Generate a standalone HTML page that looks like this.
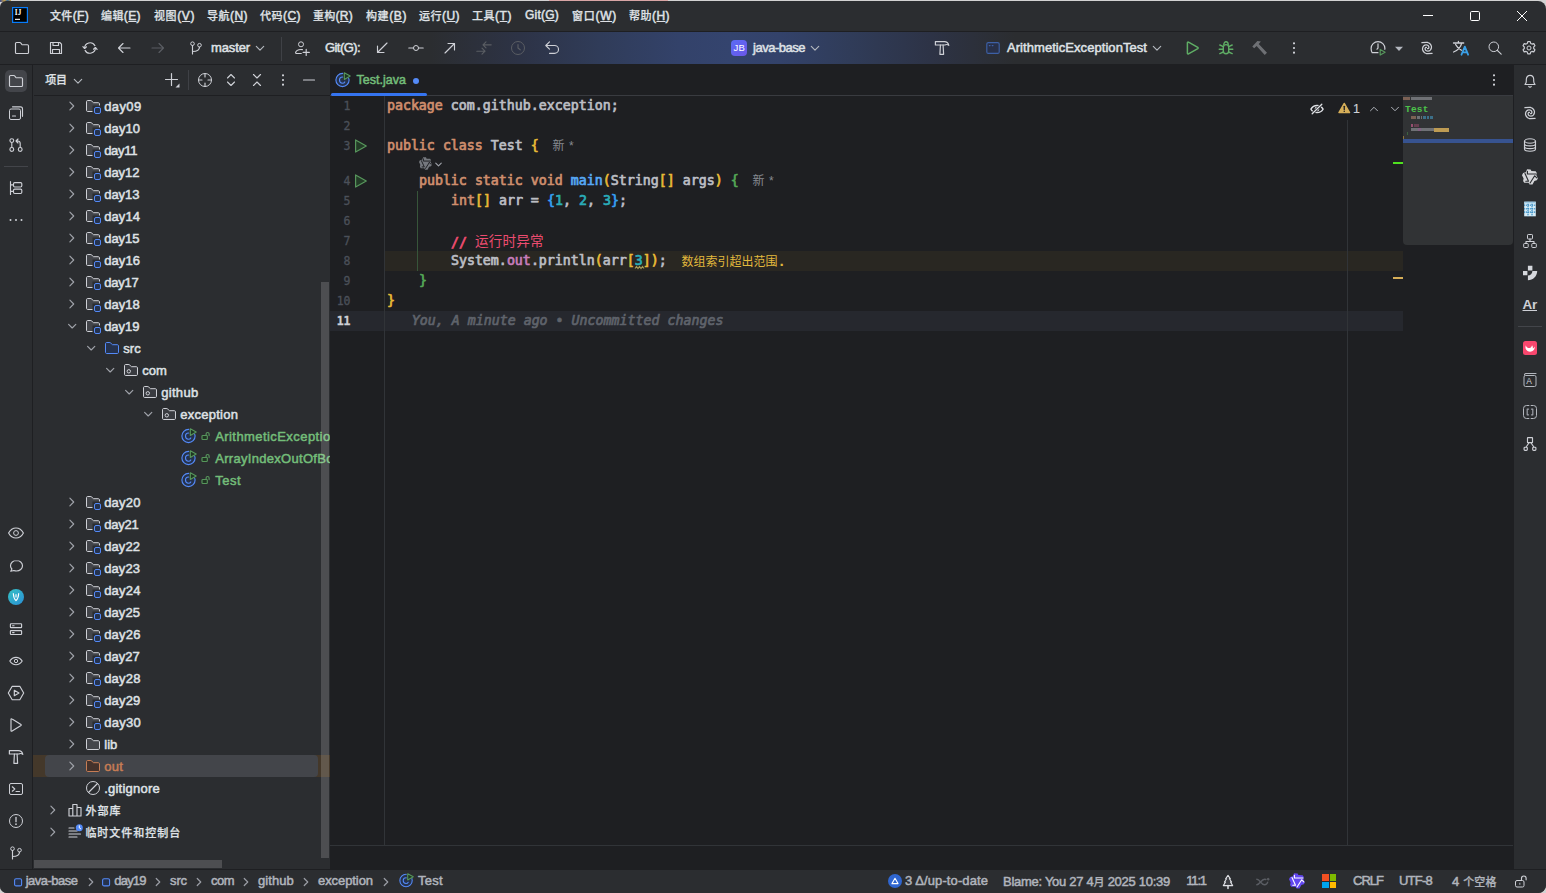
<!DOCTYPE html>
<html lang="zh-CN">
<head>
<meta charset="utf-8">
<title>java-base – Test.java</title>
<style>
html,body{margin:0;padding:0;background:#D2D2D2;}
body{width:1546px;height:893px;overflow:hidden;font-family:"Liberation Sans","Noto Sans CJK SC",sans-serif;font-size:12px;color:#DFE1E5;}
#app{position:absolute;left:0;top:1px;width:1546px;height:892px;overflow:hidden;background:#2B2D30;border-radius:6px 8px 8px 7px;}
#win{position:absolute;left:0;top:-1px;width:1546px;height:893px;}
#app *{box-sizing:border-box;}
.a{position:absolute;}
.i{position:absolute;overflow:visible;}
.t{position:absolute;white-space:nowrap;line-height:20px;height:20px;font-size:13px;-webkit-text-stroke:0.5px currentColor;}
.z{font-family:"Noto Sans CJK SC",sans-serif;font-size:11px;font-weight:500;-webkit-text-stroke:0.25px currentColor;}
.hl{position:absolute;background:#1E1F22;height:1px;}
.vl{position:absolute;background:#1E1F22;width:1px;}
u{text-decoration:underline;text-underline-offset:0.5px;text-decoration-thickness:1px;}
/* toolbar */
#toolbar{position:absolute;left:0;top:32px;width:1546px;height:32px;background:linear-gradient(90deg,#2B2D30 0,#2B2D30 430px,#2D3346 520px,#303c59 600px,#33426a 680px,#34446e 730px,#33426a 780px,#303c59 850px,#2D3346 930px,#2B2D30 1015px,#2B2D30 100%);}
/* project */
#proj{position:absolute;left:34px;top:65px;width:296px;height:804px;background:#2B2D30;overflow:hidden;}
/* editor */
#editor{position:absolute;left:330px;top:65px;width:1183px;height:804px;background:#1E1F22;overflow:hidden;}
.code{position:absolute;white-space:pre;font-family:"DejaVu Sans Mono","Liberation Mono","Noto Sans CJK SC",monospace;font-size:13.29px;line-height:20px;height:20px;color:#BCBEC4;}
.ln{position:absolute;text-align:right;font-family:"DejaVu Sans Mono","Liberation Mono",monospace;font-size:11.5px;line-height:20px;height:20px;color:#4B5059;}
.k{color:#CF8E6D;}
.n{color:#2AACB8;}
.m{color:#56A8F5;}
.f{color:#C77DBB;}
.c{color:#EC4C70;}
.b1{color:#E8BA36;}
.b2{color:#54A857;}
.b3{color:#359FF4;}
.code{-webkit-text-stroke:0.7px currentColor;}
.hint{letter-spacing:0.6px;color:#868A91;-webkit-text-stroke:0;font-family:"Liberation Sans","Noto Sans CJK SC",sans-serif;}
.blame{color:#5F636B;font-style:italic;}
.zc{position:relative;top:-0.6px;font-family:"Noto Sans CJK SC",sans-serif;font-size:13.6px;letter-spacing:0.2px;font-weight:400;-webkit-text-stroke:0;}
.warnhint .z{font-weight:400;-webkit-text-stroke:0;font-size:12px;}
.ln{-webkit-text-stroke:0.3px currentColor;}
.edge{position:absolute;}
.dot{font-family:"DejaVu Sans Mono","Liberation Mono",monospace;font-weight:bold;font-size:13px;}

</style>
</head>
<body>
<div class="edge" style="left:549px;top:0;width:119px;height:1px;background:#D9A5A5"></div>
<div class="edge" style="left:0;top:0;width:11px;height:2px;background:linear-gradient(90deg,#3A4A8A,#C9A24A 40%,#3A6A9A 70%,#C9A24A)"></div>
<div id="app">
<div id="win">
<!-- ===== title / menu bar ===== -->
<svg class="i" style="left:12px;top:7px" width="16" height="16" viewBox="0 0 16 16">
<rect x="0.6" y="0.6" width="14.8" height="14.8" fill="#000" stroke="#087CFA" stroke-width="1.2"/>
<text x="2.7" y="8.1" font-family="Liberation Serif, serif" font-weight="bold" font-size="7.2" fill="#fff" letter-spacing="0.2">IJ</text>
<rect x="3" y="11.8" width="5" height="1.1" fill="#fff"/></svg>
<span class="t " style="left:50px;top:5.3px;font-size:12px;letter-spacing:0.331px;"><span class="z">文件</span>(<u>F</u>)</span>
<span class="t " style="left:101px;top:5.3px;font-size:12px;letter-spacing:0.397px;"><span class="z">编辑</span>(<u>E</u>)</span>
<span class="t " style="left:154px;top:5.3px;font-size:12px;letter-spacing:0.597px;"><span class="z">视图</span>(<u>V</u>)</span>
<span class="t " style="left:207px;top:5.3px;font-size:12px;letter-spacing:0.466px;"><span class="z">导航</span>(<u>N</u>)</span>
<span class="t " style="left:260px;top:5.3px;font-size:12px;letter-spacing:0.466px;"><span class="z">代码</span>(<u>C</u>)</span>
<span class="t " style="left:313px;top:5.3px;font-size:12px;letter-spacing:0.266px;"><span class="z">重构</span>(<u>R</u>)</span>
<span class="t " style="left:366px;top:5.3px;font-size:12px;letter-spacing:0.597px;"><span class="z">构建</span>(<u>B</u>)</span>
<span class="t " style="left:419px;top:5.3px;font-size:12px;letter-spacing:0.466px;"><span class="z">运行</span>(<u>U</u>)</span>
<span class="t " style="left:472px;top:5.3px;font-size:12px;letter-spacing:0.531px;"><span class="z">工具</span>(<u>T</u>)</span>
<span class="t " style="left:525px;top:5.3px;font-size:12px;letter-spacing:0.219px;">Git(<u>G</u>)</span>
<span class="t " style="left:572px;top:5.3px;font-size:12px;letter-spacing:0.734px;"><span class="z">窗口</span>(<u>W</u>)</span>
<span class="t " style="left:629px;top:5.3px;font-size:12px;letter-spacing:0.466px;"><span class="z">帮助</span>(<u>H</u>)</span>
<svg class="i" style="left:1420px;top:8px" width="16" height="16" viewBox="0 0 16 16" ><path d="M3 7.5h10" stroke="#fff" stroke-width="1" fill="none"/></svg>
<svg class="i" style="left:1467px;top:8px" width="16" height="16" viewBox="0 0 16 16" ><rect x="3.5" y="3.5" width="9" height="9" rx="1.2" stroke="#fff" stroke-width="1" fill="none"/></svg>
<svg class="i" style="left:1514px;top:8px" width="16" height="16" viewBox="0 0 16 16" ><path d="M3 3l10 10M13 3L3 13" stroke="#fff" stroke-width="1" fill="none"/></svg>
<div class="hl" style="left:0;top:31px;width:1546px"></div>
<!-- ===== main toolbar ===== -->
<div id="toolbar"></div>
<svg class="i" style="left:14px;top:40px" width="16" height="16" viewBox="0 0 16 16" ><path d="M1.5 3.6c0-.6.5-1.1 1.1-1.1h3.3c.3 0 .6.1.8.4l1.1 1.4c.2.2.5.4.8.4h4.8c.6 0 1.1.5 1.1 1.1v6.6c0 .6-.5 1.1-1.1 1.1H2.6c-.6 0-1.1-.5-1.1-1.1z" stroke="#CED0D6" stroke-width="1.15" fill="none" stroke-linecap="round" stroke-linejoin="round" /></svg>
<svg class="i" style="left:48px;top:40px" width="16" height="16" viewBox="0 0 16 16" ><path d="M2.5 2.5h9.3l1.7 1.7v9.3h-11zM5 2.5v3h5.5v-3M4.5 13.5v-4h7v4" stroke="#CED0D6" stroke-width="1.15" fill="none" stroke-linecap="round" stroke-linejoin="round" /></svg>
<svg class="i" style="left:82px;top:40px" width="16" height="16" viewBox="0 0 16 16" ><path d="M2.6 8.3A5.5 5.5 0 0 1 12.9 5.6M13.4 7.7A5.5 5.5 0 0 1 3.1 10.4" stroke="#CED0D6" stroke-width="1.15" fill="none" stroke-linecap="round" stroke-linejoin="round" /><path d="M.9 6.6l1.7 1.9 1.9-1.7M15.1 9.4l-1.7-1.9-1.9 1.7" stroke="#CED0D6" stroke-width="1.15" fill="none" stroke-linecap="round" stroke-linejoin="round" /></svg>
<svg class="i" style="left:116px;top:40px" width="16" height="16" viewBox="0 0 16 16" ><path d="M14 8H2.5M7 3.5L2.5 8 7 12.5" stroke="#CED0D6" stroke-width="1.15" fill="none" stroke-linecap="round" stroke-linejoin="round" /></svg>
<svg class="i" style="left:150px;top:40px" width="16" height="16" viewBox="0 0 16 16" ><path d="M2 8h11.5M9 3.5L13.5 8 9 12.5" stroke="#5A5D63" stroke-width="1.15" fill="none" stroke-linecap="round" stroke-linejoin="round" /></svg>
<svg class="i" style="left:188px;top:40px" width="16" height="16" viewBox="0 0 16 16" ><path d="M4.5 5.5v8.5M4.5 11.5c4 0 7-1 7-4.5" stroke="#CED0D6" stroke-width="1.15" fill="none" stroke-linecap="round" stroke-linejoin="round" /><circle cx="4.5" cy="3.7" r="1.8" stroke="#CED0D6" fill="none"/><circle cx="11.5" cy="5.2" r="1.8" stroke="#CED0D6" fill="none"/></svg>
<svg class="i" style="left:252px;top:40px" width="16" height="16" viewBox="0 0 16 16" ><path d="M4.3 6.4l3.7 3.7 3.7-3.7" stroke="#B4B8BF" stroke-width="1.15" fill="none" stroke-linecap="round" stroke-linejoin="round" /></svg>
<svg class="i" style="left:294px;top:40px" width="16" height="16" viewBox="0 0 16 16" ><circle cx="7" cy="4.3" r="2.5" stroke="#CED0D6" fill="none"/><path d="M7.3 13.5H2.3c-.5 0-.8-.4-.7-.9.5-2 2.4-3.1 5.4-3.1.6 0 1 0 1.4.1M12.2 9.3v6.2M9.1 12.4h6.2" stroke="#CED0D6" stroke-width="1.15" fill="none" stroke-linecap="round" stroke-linejoin="round" /></svg>
<svg class="i" style="left:374px;top:40px" width="16" height="16" viewBox="0 0 16 16" ><path d="M13 3L3.5 12.5M3.5 6v6.5H10" stroke="#CED0D6" stroke-width="1.15" fill="none" stroke-linecap="round" stroke-linejoin="round" /></svg>
<svg class="i" style="left:408px;top:40px" width="16" height="16" viewBox="0 0 16 16" ><circle cx="8" cy="8" r="2.500" stroke="#CED0D6" fill="none"/><path d="M.8 8h4.7M10.5 8h4.7" stroke="#CED0D6" stroke-width="1.15" fill="none" stroke-linecap="round" stroke-linejoin="round" /></svg>
<svg class="i" style="left:442px;top:40px" width="16" height="16" viewBox="0 0 16 16" ><path d="M3 13L12.5 3.5M6 3.5h6.5V10" stroke="#CED0D6" stroke-width="1.15" fill="none" stroke-linecap="round" stroke-linejoin="round" /></svg>
<svg class="i" style="left:476px;top:40px" width="16" height="16" viewBox="0 0 16 16" ><path d="M15.2 4.8H7M10 1.8L7 4.8l3 3M.8 11.2H9M6 8.2l3 3-3 3" stroke="#5A5D63" stroke-width="1.15" fill="none" stroke-linecap="round" stroke-linejoin="round" /></svg>
<svg class="i" style="left:510px;top:40px" width="16" height="16" viewBox="0 0 16 16" ><circle cx="8" cy="8" r="6.500" stroke="#5A5D63" fill="none"/><path d="M8 4.5V8l2.2 1.8" stroke="#5A5D63" stroke-width="1.15" fill="none" stroke-linecap="round" stroke-linejoin="round" /></svg>
<svg class="i" style="left:544px;top:40px" width="16" height="16" viewBox="0 0 16 16" ><path d="M5.5 1.8L1.8 5.5l3.7 3.7M2 5.5h8.5c2.2 0 4 1.7 4 3.9s-1.8 3.9-4 3.9H5.5" stroke="#CED0D6" stroke-width="1.15" fill="none" stroke-linecap="round" stroke-linejoin="round" /></svg>
<svg class="i" style="left:807px;top:40px" width="16" height="16" viewBox="0 0 16 16" ><path d="M4.3 6.4l3.7 3.7 3.7-3.7" stroke="#B4B8BF" stroke-width="1.15" fill="none" stroke-linecap="round" stroke-linejoin="round" /></svg>
<svg class="i" style="left:934px;top:40px" width="16" height="16" viewBox="0 0 16 16" ><path d="M1.4 1.6h9c2.1 0 3.8 1.3 4.4 3.7-1-.8-2.1-1-3.2-.6l-.8.3H1.4z" stroke="#CED0D6" stroke-width="1.2" fill="none" stroke-linecap="round" stroke-linejoin="round" /><path d="M6.4 5.2L5.9 14.3h3.7L9.1 5.2" stroke="#CED0D6" stroke-width="1.2" fill="none" stroke-linecap="round" stroke-linejoin="round" /></svg>
<svg class="i" style="left:985px;top:40px" width="16" height="16" viewBox="0 0 16 16" ><rect x="1.800" y="2.600" width="12.400" height="10.800" rx="1.500" stroke="#3D60A6" stroke-width="1.15" fill="#283048"/><path d="M4.3 5.6h.8M7.2 5.6h.8" stroke="#3D60A6" stroke-width="1.1" fill="none" stroke-linecap="round" stroke-linejoin="round" /></svg>
<svg class="i" style="left:1149px;top:40px" width="16" height="16" viewBox="0 0 16 16" ><path d="M4.3 6.4l3.7 3.7 3.7-3.7" stroke="#B4B8BF" stroke-width="1.15" fill="none" stroke-linecap="round" stroke-linejoin="round" /></svg>
<svg class="i" style="left:1184.5px;top:40px" width="16" height="16" viewBox="0 0 16 16" ><path d="M2.4 2.7v10.6c0 .6.6.9 1.1.6l9.3-5.3c.4-.3.4-.9 0-1.2L3.5 2.1c-.5-.3-1.1 0-1.1.6z" stroke="#5FAD65" stroke-width="1.5" fill="none" stroke-linecap="round" stroke-linejoin="round" /></svg>
<svg class="i" style="left:1218px;top:40px" width="16" height="16" viewBox="0 0 16 16" ><path d="M5.3 7.3c0-1.5 1.2-2.7 2.7-2.7s2.7 1.2 2.7 2.7v3.7c0 1.5-1.2 2.7-2.7 2.7s-2.7-1.2-2.7-2.7z" stroke="#5FAD65" stroke-width="1.4" fill="none" stroke-linecap="round" stroke-linejoin="round" /><path d="M5.8 4.8C5.8 3 6.8 1.8 8 1.8s2.2 1.2 2.2 3M1.2 9.2h4M10.8 9.2h4M1.8 5l3.5 1.6M14.2 5l-3.5 1.6M1.8 13.6l3.5-1.6M14.2 13.6l-3.5-1.6" stroke="#5FAD65" stroke-width="1.4" fill="none" stroke-linecap="round" stroke-linejoin="round" /></svg>
<svg class="i" style="left:1252px;top:40px" width="16" height="16" viewBox="0 0 16 16" ><path d="M.3 6.5L5.4 1l3.5.5-2.2 2.4 8.3 8.8-2.3 2.2-8.1-8.9-2.4 2.2z" fill="#6E7074" /></svg>
<svg class="i" style="left:1286px;top:40px" width="16" height="16" viewBox="0 0 16 16" ><path d="M8 2.2a1.1 1.1 0 1 0 0 2.2 1.1 1.1 0 0 0 0-2.2zM8 6.9a1.1 1.1 0 1 0 0 2.2 1.1 1.1 0 0 0 0-2.2zM8 11.6a1.1 1.1 0 1 0 0 2.2 1.1 1.1 0 0 0 0-2.2z" fill="#CED0D6" /></svg>
<svg class="i" style="left:1370px;top:40px" width="16" height="16" viewBox="0 0 16 16" ><path d="M8 12.7H2.2C1.5 11.5 1.1 10 1.1 8.5a6.9 6.9 0 0 1 13.8 0c0 .3 0 .5-.1.8M8 3.8v4.3l-1 1.1" stroke="#CED0D6" stroke-width="1.2" fill="none" stroke-linecap="round" stroke-linejoin="round" /><path d="M9 8v8.5l7.3-4.2z" fill="#2B2D30"/><path d="M10.2 9.5v5.6l4.9-2.8z" stroke="#57965C" stroke-width="1.2" fill="none" stroke-linecap="round" stroke-linejoin="round" fill="#1F3522"/></svg>
<svg class="i" style="left:1391px;top:40px" width="16" height="16" viewBox="0 0 16 16" ><path d="M4 6.8h8L8 11z" fill="#B4B8BF" /></svg>
<svg class="i" style="left:1419px;top:40px" width="16" height="16" viewBox="0 0 16 16" ><path d="M2.9 2.7L7.5 2.3L8.3 2.4L9.1 2.7L9.8 3L10.5 3.4L11.1 3.9L11.6 4.5L11.9 5.1L12.2 5.7L12.4 6.4L12.5 7L12.4 7.7L12.3 8.3L12.1 8.9L11.8 9.4L11.5 9.9L11.1 10.3L10.6 10.6L10.1 10.8L9.6 11L9.1 11.1L8.7 11.1L8.2 11L7.8 10.9L7.4 10.7L7 10.5L6.7 10.2L6.5 9.9L6.3 9.6L6.2 9.3L6.1 9L6.1 8.6L6.2 8.4L6.2 8.1L6.4 7.8L6.5 7.6L6.7 7.5L6.9 7.4L7.1 7.3L7.3 7.3L7.5 7.3M13.1 13.3L8.5 13.7L7.7 13.6L6.9 13.3L6.2 13L5.5 12.6L4.9 12.1L4.4 11.5L4.1 10.9L3.8 10.3L3.6 9.6L3.5 9L3.6 8.3L3.7 7.7L3.9 7.1L4.2 6.6L4.5 6.1L4.9 5.7L5.4 5.4L5.9 5.2L6.4 5L6.9 4.9L7.3 4.9L7.8 5L8.2 5.1L8.6 5.3L9 5.5L9.3 5.8L9.5 6.1L9.7 6.4L9.8 6.7L9.9 7L9.9 7.4L9.8 7.6L9.8 7.9L9.6 8.2L9.5 8.4L9.3 8.5L9.1 8.6L8.9 8.7L8.7 8.7L8.5 8.7" stroke="#CED0D6" stroke-width="1.25" fill="none" stroke-linecap="round" stroke-linejoin="round" /></svg>
<svg class="i" style="left:1453px;top:40px" width="16" height="16" viewBox="0 0 16 16" ><path d="M.5 3h10.2M5.4 1.5V3M8.7 3.2C7.8 7 4.8 10.4.6 12M2.6 4.5c1.2 2.4 3.2 4.4 5.8 5.8" stroke="#CED0D6" stroke-width="1.3" fill="none" stroke-linecap="round" stroke-linejoin="round" /><path d="M8.5 14.7l3.3-8 3.3 8M9.5 12.3h4.6" stroke="#3AA0E8" stroke-width="1.8" fill="none" stroke-linecap="round" stroke-linejoin="round" /></svg>
<svg class="i" style="left:1487px;top:40px" width="16" height="16" viewBox="0 0 16 16" ><circle cx="6.800" cy="6.800" r="4.800" stroke="#CED0D6" fill="none"/><path d="M10.3 10.3L14.2 14.2" stroke="#CED0D6" stroke-width="1.15" fill="none" stroke-linecap="round" stroke-linejoin="round" /></svg>
<svg class="i" style="left:1521px;top:40px" width="16" height="16" viewBox="0 0 16 16" ><path d="M6.8 1.6h2.4l.5 1.8 1.3.7 1.8-.5 1.2 2.1-1.3 1.3v1.5l1.3 1.3-1.2 2.1-1.8-.5-1.3.7-.5 1.8H6.8l-.5-1.8-1.3-.7-1.8.5-1.2-2.1 1.3-1.3V7l-1.3-1.3 1.2-2.1 1.8.5 1.3-.7z" stroke="#CED0D6" stroke-width="1.15" fill="none" stroke-linecap="round" stroke-linejoin="round" /><circle cx="8" cy="8" r="2" stroke="#CED0D6" fill="none"/></svg>
<span class="t " style="left:211px;top:38.2px;letter-spacing:-0.122px;">master</span>
<div class="a" style="left:281px;top:37px;width:1px;height:24px;background:#3F4146"></div>
<span class="t " style="left:325px;top:38.2px;letter-spacing:-0.571px;">Git(G):</span>
<div class="a" style="left:731px;top:40px;width:16px;height:16px;border-radius:4px;background:linear-gradient(135deg,#5A6BF5,#6B57E8);"></div>
<span class="t " style="left:733.6px;top:38.2px;font-size:9.5px;color:#fff;-webkit-text-stroke:0;letter-spacing:0.153px;">JB</span>
<span class="t " style="left:753px;top:38.2px;letter-spacing:-0.486px;">java-base</span>
<span class="t " style="left:1007px;top:38.2px;letter-spacing:0.055px;">ArithmeticExceptionTest</span>
<div class="hl" style="left:0;top:64px;width:1546px"></div>
<!-- ===== left tool window stripe ===== -->
<div class="vl" style="left:32px;top:65px;height:804px"></div>
<div class="a" style="left:5px;top:70px;width:22px;height:22px;border-radius:5px;background:#43454A"></div>
<svg class="i" style="left:8px;top:73px" width="16" height="16" viewBox="0 0 16 16" ><path d="M1.5 3.6c0-.6.5-1.1 1.1-1.1h3.3c.3 0 .6.1.8.4l1.1 1.4c.2.2.5.4.8.4h4.8c.6 0 1.1.5 1.1 1.1v6.6c0 .6-.5 1.1-1.1 1.1H2.6c-.6 0-1.1-.5-1.1-1.1z" stroke="#CED0D6" stroke-width="1.15" fill="none" stroke-linecap="round" stroke-linejoin="round" /></svg>
<svg class="i" style="left:8px;top:105px" width="16" height="16" viewBox="0 0 16 16" ><rect x="1.5" y="4" width="11" height="10.5" rx="1.5" stroke="#CED0D6" stroke-width="1" fill="none"/><path d="M4.5 1.8h8c1.1 0 2 .9 2 2v7.5" stroke="#CED0D6" stroke-width="1.15" fill="none" stroke-linecap="round" stroke-linejoin="round" /><path d="M4.5 11h3" stroke="#CED0D6" stroke-width="1.15" fill="none" stroke-linecap="round" stroke-linejoin="round" /></svg>
<svg class="i" style="left:8px;top:137px" width="16" height="16" viewBox="0 0 16 16" ><circle cx="3.8" cy="3.6" r="1.9" stroke="#CED0D6" stroke-width="1.15" fill="none"/><circle cx="3.8" cy="12.4" r="1.9" stroke="#CED0D6" stroke-width="1.15" fill="none"/><circle cx="12.2" cy="12.4" r="1.9" stroke="#CED0D6" stroke-width="1.15" fill="none"/><path d="M3.8 5.5v5M12.2 10.5V6.5c0-1.5-1-2.5-2.5-2.5H8.2M10 2L8 4l2 2" stroke="#CED0D6" stroke-width="1.15" fill="none" stroke-linecap="round" stroke-linejoin="round" /></svg>
<svg class="i" style="left:8px;top:180px" width="16" height="16" viewBox="0 0 16 16" ><path d="M2.5 1.5v13M2.5 4.8h3M2.5 11.3h3" stroke="#CED0D6" stroke-width="1.15" fill="none" stroke-linecap="round" stroke-linejoin="round" /><rect x="5.5" y="2.6" width="8.3" height="4.4" rx="1.2" stroke="#CED0D6" stroke-width="1.15" fill="none"/><rect x="5.5" y="9.1" width="8.3" height="4.4" rx="1.2" stroke="#CED0D6" stroke-width="1.15" fill="none"/></svg>
<svg class="i" style="left:8px;top:211.5px" width="16" height="16" viewBox="0 0 16 16" ><path d="M2.5 7a1 1 0 1 0 0 2 1 1 0 0 0 0-2zM8 7a1 1 0 1 0 0 2 1 1 0 0 0 0-2zM13.5 7a1 1 0 1 0 0 2 1 1 0 0 0 0-2z" fill="#CED0D6" /></svg>
<svg class="i" style="left:8px;top:525px" width="16" height="16" viewBox="0 0 16 16" ><path d="M.6 8C2.2 5 4.8 3 8 3s5.8 2 7.4 5c-1.6 3-4.2 5-7.4 5S2.2 11 .6 8z" stroke="#CED0D6" stroke-width="1.15" fill="none" stroke-linecap="round" stroke-linejoin="round" /><circle cx="8" cy="8" r="2.4" stroke="#CED0D6" stroke-width="1" fill="none"/></svg>
<svg class="i" style="left:8px;top:557.5px" width="16" height="16" viewBox="0 0 16 16" ><path d="M8.5 2.5c-3.3 0-6 2.3-6 5.2 0 1.3.5 2.4 1.4 3.3L2.8 13.3l3-.8c.8.3 1.7.5 2.7.5 3.3 0 6-2.3 6-5.3s-2.7-5.2-6-5.2z" stroke="#CED0D6" stroke-width="1.15" fill="none" stroke-linecap="round" stroke-linejoin="round" /></svg>
<svg class="i" style="left:8px;top:621px" width="16" height="16" viewBox="0 0 16 16" ><rect x="2.4" y="2.7" width="11.2" height="3.9" rx="0.7" stroke="#CED0D6" stroke-width="1.15" fill="none"/><rect x="2.4" y="9.6" width="11.2" height="3.9" rx="0.7" stroke="#CED0D6" stroke-width="1.15" fill="none"/><path d="M4.6 4.7h1.5M4.6 11.6h1.5" stroke="#CED0D6" stroke-width="1.1" fill="none" stroke-linecap="round" stroke-linejoin="round" /></svg>
<svg class="i" style="left:8px;top:653px" width="16" height="16" viewBox="0 0 16 16" ><path d="M1.8 8C3.2 5.8 5.4 4.3 8 4.3s4.8 1.5 6.2 3.7c-1.4 2.2-3.6 3.7-6.2 3.7S3.2 10.2 1.8 8z" stroke="#CED0D6" stroke-width="1.15" fill="none" stroke-linecap="round" stroke-linejoin="round" /><circle cx="8" cy="8" r="1.7" stroke="#CED0D6" stroke-width="1" fill="none"/></svg>
<svg class="i" style="left:8px;top:685px" width="16" height="16" viewBox="0 0 16 16" ><path d="M4.2 1.3h7.6L15.7 8l-3.9 6.7H4.2L.3 8z" stroke="#CED0D6" stroke-width="1.15" fill="none" stroke-linecap="round" stroke-linejoin="round" /><path d="M6.3 5.3v5.4L11 8z" stroke="#CED0D6" stroke-width="1.15" fill="none" stroke-linecap="round" stroke-linejoin="round" /></svg>
<svg class="i" style="left:8px;top:717px" width="16" height="16" viewBox="0 0 16 16" ><path d="M3 2.2v11.6c0 .4.4.6.7.4l9.3-5.8c.3-.2.3-.6 0-.8L3.7 1.8c-.3-.2-.7 0-.7.4z" stroke="#CED0D6" stroke-width="1.15" fill="none" stroke-linecap="round" stroke-linejoin="round" /></svg>
<svg class="i" style="left:8px;top:749px" width="16" height="16" viewBox="0 0 16 16" ><path d="M1.4 1.6h9c2.1 0 3.8 1.3 4.4 3.7-1-.8-2.1-1-3.2-.6l-.8.3H1.4z" stroke="#CED0D6" stroke-width="1.2" fill="none" stroke-linecap="round" stroke-linejoin="round" /><path d="M6.4 5.2L5.9 14.3h3.7L9.1 5.2" stroke="#CED0D6" stroke-width="1.2" fill="none" stroke-linecap="round" stroke-linejoin="round" /></svg>
<svg class="i" style="left:8px;top:781px" width="16" height="16" viewBox="0 0 16 16" ><rect x="1.5" y="2.5" width="13" height="11" rx="1.5" stroke="#CED0D6" stroke-width="1" fill="none"/><path d="M4.3 5.8L6.8 8l-2.5 2.2M8 10.5h3.5" stroke="#CED0D6" stroke-width="1.15" fill="none" stroke-linecap="round" stroke-linejoin="round" /></svg>
<svg class="i" style="left:8px;top:813px" width="16" height="16" viewBox="0 0 16 16" ><circle cx="8" cy="8" r="6.5" stroke="#CED0D6" stroke-width="1" fill="none"/><path d="M8 4.5v4.2" stroke="#CED0D6" stroke-width="1.3" fill="none" stroke-linecap="round" stroke-linejoin="round" /><path d="M8 10.3a.85.85 0 1 0 0 1.7.85.85 0 0 0 0-1.7z" fill="#CED0D6" /></svg>
<svg class="i" style="left:8px;top:845px" width="16" height="16" viewBox="0 0 16 16" ><path d="M4.5 5.5v8.5M4.5 11.5c4 0 7-1 7-4.5" stroke="#CED0D6" stroke-width="1.15" fill="none" stroke-linecap="round" stroke-linejoin="round" /><circle cx="4.5" cy="3.7" r="1.8" stroke="#CED0D6" fill="none"/><circle cx="11.5" cy="5.2" r="1.8" stroke="#CED0D6" fill="none"/></svg>
<div class="a" style="left:4px;top:166px;width:24px;height:1px;background:#43454A"></div>
<div class="a" style="left:8px;top:589px;width:16px;height:16px;border-radius:8px;background:linear-gradient(135deg,#35C2C4,#2A8FD6)"></div>
<svg class="i" style="left:8px;top:589px" width="16" height="16" viewBox="0 0 16 16" ><path d="M5.3 4.5c.2 3.3 1.2 5.8 2.7 7.2 1.5-1.4 2.5-3.9 2.7-7.2M8 5.5v2.5" stroke="#fff" stroke-width="1.1" fill="none" stroke-linecap="round" stroke-linejoin="round" /></svg>
<!-- ===== right tool window stripe ===== -->
<div class="vl" style="left:1513px;top:65px;height:804px"></div>
<svg class="i" style="left:1522px;top:72.5px" width="16" height="16" viewBox="0 0 16 16" ><path d="M3 11.5c1-.9 1.3-2 1.3-3.5V6.5C4.3 4.1 5.9 2.3 8 2.3s3.7 1.8 3.7 4.2V8c0 1.5.3 2.6 1.3 3.5z" stroke="#CED0D6" stroke-width="1.15" fill="none" stroke-linecap="round" stroke-linejoin="round" /><path d="M6.8 13.5c.3.5.7.7 1.2.7s.9-.2 1.2-.7" stroke="#CED0D6" stroke-width="1.2" fill="none" stroke-linecap="round" stroke-linejoin="round" /></svg>
<svg class="i" style="left:1522px;top:105px" width="16" height="16" viewBox="0 0 16 16" ><path d="M2.9 2.7L7.5 2.3L8.3 2.4L9.1 2.7L9.8 3L10.5 3.4L11.1 3.9L11.6 4.5L11.9 5.1L12.2 5.7L12.4 6.4L12.5 7L12.4 7.7L12.3 8.3L12.1 8.9L11.8 9.4L11.5 9.9L11.1 10.3L10.6 10.6L10.1 10.8L9.6 11L9.1 11.1L8.7 11.1L8.2 11L7.8 10.9L7.4 10.7L7 10.5L6.7 10.2L6.5 9.9L6.3 9.6L6.2 9.3L6.1 9L6.1 8.6L6.2 8.4L6.2 8.1L6.4 7.8L6.5 7.6L6.7 7.5L6.9 7.4L7.1 7.3L7.3 7.3L7.5 7.3M13.1 13.3L8.5 13.7L7.7 13.6L6.9 13.3L6.2 13L5.5 12.6L4.9 12.1L4.4 11.5L4.1 10.9L3.8 10.3L3.6 9.6L3.5 9L3.6 8.3L3.7 7.7L3.9 7.1L4.2 6.6L4.5 6.1L4.9 5.7L5.4 5.4L5.9 5.2L6.4 5L6.9 4.9L7.3 4.9L7.8 5L8.2 5.1L8.6 5.3L9 5.5L9.3 5.8L9.5 6.1L9.7 6.4L9.8 6.7L9.9 7L9.9 7.4L9.8 7.6L9.8 7.9L9.6 8.2L9.5 8.4L9.3 8.5L9.1 8.6L8.9 8.7L8.7 8.7L8.5 8.7" stroke="#CED0D6" stroke-width="1.25" fill="none" stroke-linecap="round" stroke-linejoin="round" /></svg>
<svg class="i" style="left:1522px;top:137px" width="16" height="16" viewBox="0 0 16 16" ><ellipse cx="8" cy="4" rx="5.500" ry="2.200" stroke="#CED0D6" fill="none"/><path d="M2.5 4v8c0 1.2 2.5 2.2 5.5 2.2s5.5-1 5.5-2.2V4M2.5 6.7c0 1.2 2.5 2.2 5.5 2.2s5.5-1 5.5-2.2M2.5 9.4c0 1.2 2.5 2.2 5.5 2.2s5.5-1 5.5-2.2" stroke="#CED0D6" stroke-width="1.15" fill="none" stroke-linecap="round" stroke-linejoin="round" /></svg>
<svg class="i" style="left:1522px;top:169px" width="16" height="16" viewBox="0 0 16 16" ><path d="M5.1 .2l3.5.2.8 1.6 4.3.2 1.1 1.9-.5 1.8 1.6 3.5-1.1 1.9-2.4.8-1.9 3.5H7.6l-1.1-1.9H2.2l-1.1-1.8.5-2.5L0 6.2l1.1-2.1 2.7-.8z" fill="#D4D5D8" /><path d="M5.4 2.3V5h8.6M3 4.6l3.5 7.6H3.8M12.7 6.8L8.1 14M12.7 6.8l2.1 2.1" stroke="#2B2D30" stroke-width="1.15" fill="none" stroke-linecap="round" stroke-linejoin="round" /></svg>
<svg class="i" style="left:1522px;top:201px" width="16" height="16" viewBox="0 0 16 16" ><rect x="2.2" y="0.7" width="11.6" height="14.6" fill="#D5ECF7"/><path d="M2.2 4.3h11.6M2.2 7.7h11.6M2.2 11.1h11.6M6 .7v14.6M10 .7v14.6" stroke="#3B8FC4" stroke-width="1.600" stroke-dasharray="1 1" fill="none"/><path d="M2.2 1.5h11.6" stroke="#9CC8E2" stroke-width="1.500" fill="none"/></svg>
<svg class="i" style="left:1522px;top:233px" width="16" height="16" viewBox="0 0 16 16" ><rect x="5.5" y="1.5" width="5" height="4.5" rx="0.7" stroke="#CED0D6" stroke-width="1" fill="none"/><rect x="1.7" y="10.5" width="4.5" height="4" rx="0.7" stroke="#CED0D6" stroke-width="1" fill="none"/><rect x="9.8" y="10.5" width="4.5" height="4" rx="0.7" stroke="#CED0D6" stroke-width="1" fill="none"/><path d="M8 6v2.5M4 10.5v-2h8v2" stroke="#CED0D6" stroke-width="1.15" fill="none" stroke-linecap="round" stroke-linejoin="round" /></svg>
<svg class="i" style="left:1522px;top:265px" width="16" height="16" viewBox="0 0 16 16" ><path d="M5.9 .8h4.5v4.6H5.9zM1 5.9h4.4v4.4H1z" fill="#D5D7DC" /><path d="M10.4 5.9h4.8c0 5.1-4.1 9.3-9.3 9.3v-4.8c2.5 0 4.5-2 4.5-4.5z" fill="#D5D7DC" /></svg>
<svg class="i" style="left:1522px;top:340px" width="16" height="16" viewBox="0 0 16 16" ><rect x="1" y="1" width="14" height="14" rx="2.500" fill="#F8476E"/><path d="M3.8 5.2c-.9 2.2-.2 4.5 1.7 5.7 2 1.2 4.6.9 6.2-.8.9-1 1.2-2.3.9-3.5-.3.9-.9 1.6-1.8 1.9.3-1.1 0-2.3-.8-3.2-.1 1.2-.9 2.2-2 2.6-1.3.4-2.7 0-3.5-1.1-.4-.5-.6-1-.7-1.6z" fill="#fff" /></svg>
<svg class="i" style="left:1522px;top:372px" width="16" height="16" viewBox="0 0 16 16" ><rect x="2" y="3.5" width="12" height="11" rx="1.5" stroke="#B4B8BF" stroke-width="1" fill="none"/><path d="M3.5 1.5h10.5M2.5 3c0-1 .5-1.5 1.5-1.5" stroke="#B4B8BF" stroke-width="1.15" fill="none" stroke-linecap="round" stroke-linejoin="round" /></svg>
<svg class="i" style="left:1522px;top:404px" width="16" height="16" viewBox="0 0 16 16" ><rect x="1.5" y="1.5" width="13" height="13" rx="3" stroke="#B4B8BF" stroke-width="1" fill="none"/><path d="M6.5 5.2H5.2v5.6h1.3M9.5 5.2h1.3v5.6H9.5" stroke="#9DA0A8" stroke-width="1.2" fill="none" stroke-linecap="round" stroke-linejoin="round" /><path d="M7.3 .8h1.4v1.4H7.3zM7.3 13.8h1.4v1.4H7.3z" fill="#2B2D30" /></svg>
<svg class="i" style="left:1522px;top:436px" width="16" height="16" viewBox="0 0 16 16" ><rect x="5.5" y="1.6" width="5" height="5" rx="0.4" stroke="#CED0D6" stroke-width="1.15" fill="none"/><rect x="2.1" y="11.2" width="3.2" height="3.2" rx="0.9" stroke="#CED0D6" stroke-width="1.15" fill="none"/><rect x="10.7" y="11.2" width="3.2" height="3.2" rx="0.9" stroke="#CED0D6" stroke-width="1.15" fill="none"/><path d="M7 6.8L4.2 11M9 6.8L11.8 11" stroke="#CED0D6" stroke-width="1.15" fill="none" stroke-linecap="round" stroke-linejoin="round" /></svg>
<span class="t " style="left:1522.5px;top:294.5px;font-size:13.5px;font-weight:bold;color:#CED0D6;-webkit-text-stroke:0;letter-spacing:-0.258px;"><u>Ar</u></span>
<span class="t " style="left:1526.2px;top:370.8px;font-size:8.5px;color:#CED0D6;-webkit-text-stroke:0;letter-spacing:1.128px;">A</span>
<div class="a" style="left:1518px;top:326px;width:24px;height:1px;background:#43454A"></div>
<!-- ===== project tool window ===== -->
<div id="proj"></div>
<span class="t " style="left:45.2px;top:68.9px;letter-spacing:-0.150px;"><span class="z">项目</span></span>
<svg class="i" style="left:70px;top:72.5px" width="16" height="16" viewBox="0 0 16 16" ><path d="M4.3 6.4l3.7 3.7 3.7-3.7" stroke="#B4B8BF" stroke-width="1.15" fill="none" stroke-linecap="round" stroke-linejoin="round" /></svg>
<svg class="i" style="left:163.5px;top:72px" width="16" height="16" viewBox="0 0 16 16" ><path d="M7.5 1.5v12M1.5 7.5h12" stroke="#CED0D6" stroke-width="1.2" fill="none" stroke-linecap="round" stroke-linejoin="round" /><path d="M15.5 11.5v4h-4z" fill="#CED0D6" /></svg>
<svg class="i" style="left:197px;top:72px" width="16" height="16" viewBox="0 0 16 16" ><circle cx="8" cy="8" r="6.5" stroke="#CED0D6" stroke-width="1" fill="none"/><path d="M8 1.5V5M8 11v3.5M1.5 8H5M11 8h3.5" stroke="#CED0D6" stroke-width="1.15" fill="none" stroke-linecap="round" stroke-linejoin="round" /></svg>
<svg class="i" style="left:223px;top:72px" width="16" height="16" viewBox="0 0 16 16" ><path d="M4.5 6L8 2.5 11.5 6M4.5 10L8 13.5 11.5 10" stroke="#CED0D6" stroke-width="1.15" fill="none" stroke-linecap="round" stroke-linejoin="round" /></svg>
<svg class="i" style="left:249px;top:72px" width="16" height="16" viewBox="0 0 16 16" ><path d="M4.5 2.5L8 6l3.5-3.5M4.5 13.5L8 10l3.5 3.5" stroke="#CED0D6" stroke-width="1.15" fill="none" stroke-linecap="round" stroke-linejoin="round" /></svg>
<svg class="i" style="left:275px;top:72px" width="16" height="16" viewBox="0 0 16 16" ><path d="M8 2.2a1.1 1.1 0 1 0 0 2.2 1.1 1.1 0 0 0 0-2.2zM8 6.9a1.1 1.1 0 1 0 0 2.2 1.1 1.1 0 0 0 0-2.2zM8 11.6a1.1 1.1 0 1 0 0 2.2 1.1 1.1 0 0 0 0-2.2z" fill="#CED0D6" /></svg>
<svg class="i" style="left:301px;top:72px" width="16" height="16" viewBox="0 0 16 16" ><path d="M2.5 8h11" stroke="#CED0D6" stroke-width="1.15" fill="none" stroke-linecap="round" stroke-linejoin="round" /></svg>
<div class="a" style="left:188px;top:70px;width:1px;height:20px;background:#3F4146"></div>
<div class="hl" style="left:34px;top:95px;width:296px"></div>
<div class="a" style="left:33px;top:755px;width:297px;height:22px;background:#44382A"></div>
<div class="a" style="left:45px;top:755px;width:273px;height:22px;border-radius:4px;background:#43454A"></div>
<div class="a" id="tree" style="left:34px;top:96px;width:296px;height:773px;overflow:hidden">
<svg class="i" style="left:29.8px;top:2px" width="16" height="16" viewBox="0 0 16 16" ><path d="M5.9 4.2L9.7 8 5.9 11.8" stroke="#A0A3AA" stroke-width="1.15" fill="none" stroke-linecap="round" stroke-linejoin="round" /></svg>
<svg class="i" style="left:50.5px;top:2px" width="16" height="16" viewBox="0 0 16 16" ><path d="M1.5 3.6c0-.6.5-1.1 1.1-1.1h3.3c.3 0 .6.1.8.4l1.1 1.4c.2.2.5.4.8.4h4.8c.6 0 1.1.5 1.1 1.1v6.6c0 .6-.5 1.1-1.1 1.1H2.6c-.6 0-1.1-.5-1.1-1.1z" fill="#43454A" stroke="#CED0D6" stroke-width="1" stroke-linejoin="round"/><rect x="7.500" y="7.500" width="9" height="9" fill="#2B2D30"/><rect x="9.500" y="9.500" width="6" height="6" rx="1.500" fill="#25324D" stroke="#548AF7" stroke-width="1"/></svg>
<span class="t " style="left:70.2px;top:0.5px;letter-spacing:0.396px;">day09</span>
<svg class="i" style="left:29.8px;top:24px" width="16" height="16" viewBox="0 0 16 16" ><path d="M5.9 4.2L9.7 8 5.9 11.8" stroke="#A0A3AA" stroke-width="1.15" fill="none" stroke-linecap="round" stroke-linejoin="round" /></svg>
<svg class="i" style="left:50.5px;top:24px" width="16" height="16" viewBox="0 0 16 16" ><path d="M1.5 3.6c0-.6.5-1.1 1.1-1.1h3.3c.3 0 .6.1.8.4l1.1 1.4c.2.2.5.4.8.4h4.8c.6 0 1.1.5 1.1 1.1v6.6c0 .6-.5 1.1-1.1 1.1H2.6c-.6 0-1.1-.5-1.1-1.1z" fill="#43454A" stroke="#CED0D6" stroke-width="1" stroke-linejoin="round"/><rect x="7.500" y="7.500" width="9" height="9" fill="#2B2D30"/><rect x="9.500" y="9.500" width="6" height="6" rx="1.500" fill="#25324D" stroke="#548AF7" stroke-width="1"/></svg>
<span class="t " style="left:70.2px;top:22.5px;letter-spacing:0.116px;">day10</span>
<svg class="i" style="left:29.8px;top:46px" width="16" height="16" viewBox="0 0 16 16" ><path d="M5.9 4.2L9.7 8 5.9 11.8" stroke="#A0A3AA" stroke-width="1.15" fill="none" stroke-linecap="round" stroke-linejoin="round" /></svg>
<svg class="i" style="left:50.5px;top:46px" width="16" height="16" viewBox="0 0 16 16" ><path d="M1.5 3.6c0-.6.5-1.1 1.1-1.1h3.3c.3 0 .6.1.8.4l1.1 1.4c.2.2.5.4.8.4h4.8c.6 0 1.1.5 1.1 1.1v6.6c0 .6-.5 1.1-1.1 1.1H2.6c-.6 0-1.1-.5-1.1-1.1z" fill="#43454A" stroke="#CED0D6" stroke-width="1" stroke-linejoin="round"/><rect x="7.500" y="7.500" width="9" height="9" fill="#2B2D30"/><rect x="9.500" y="9.500" width="6" height="6" rx="1.500" fill="#25324D" stroke="#548AF7" stroke-width="1"/></svg>
<span class="t " style="left:70.2px;top:44.5px;letter-spacing:-0.294px;">day11</span>
<svg class="i" style="left:29.8px;top:68px" width="16" height="16" viewBox="0 0 16 16" ><path d="M5.9 4.2L9.7 8 5.9 11.8" stroke="#A0A3AA" stroke-width="1.15" fill="none" stroke-linecap="round" stroke-linejoin="round" /></svg>
<svg class="i" style="left:50.5px;top:68px" width="16" height="16" viewBox="0 0 16 16" ><path d="M1.5 3.6c0-.6.5-1.1 1.1-1.1h3.3c.3 0 .6.1.8.4l1.1 1.4c.2.2.5.4.8.4h4.8c.6 0 1.1.5 1.1 1.1v6.6c0 .6-.5 1.1-1.1 1.1H2.6c-.6 0-1.1-.5-1.1-1.1z" fill="#43454A" stroke="#CED0D6" stroke-width="1" stroke-linejoin="round"/><rect x="7.500" y="7.500" width="9" height="9" fill="#2B2D30"/><rect x="9.500" y="9.500" width="6" height="6" rx="1.500" fill="#25324D" stroke="#548AF7" stroke-width="1"/></svg>
<span class="t " style="left:70.2px;top:66.5px;letter-spacing:-0.024px;">day12</span>
<svg class="i" style="left:29.8px;top:90px" width="16" height="16" viewBox="0 0 16 16" ><path d="M5.9 4.2L9.7 8 5.9 11.8" stroke="#A0A3AA" stroke-width="1.15" fill="none" stroke-linecap="round" stroke-linejoin="round" /></svg>
<svg class="i" style="left:50.5px;top:90px" width="16" height="16" viewBox="0 0 16 16" ><path d="M1.5 3.6c0-.6.5-1.1 1.1-1.1h3.3c.3 0 .6.1.8.4l1.1 1.4c.2.2.5.4.8.4h4.8c.6 0 1.1.5 1.1 1.1v6.6c0 .6-.5 1.1-1.1 1.1H2.6c-.6 0-1.1-.5-1.1-1.1z" fill="#43454A" stroke="#CED0D6" stroke-width="1" stroke-linejoin="round"/><rect x="7.500" y="7.500" width="9" height="9" fill="#2B2D30"/><rect x="9.500" y="9.500" width="6" height="6" rx="1.500" fill="#25324D" stroke="#548AF7" stroke-width="1"/></svg>
<span class="t " style="left:70.2px;top:88.5px;letter-spacing:-0.024px;">day13</span>
<svg class="i" style="left:29.8px;top:112px" width="16" height="16" viewBox="0 0 16 16" ><path d="M5.9 4.2L9.7 8 5.9 11.8" stroke="#A0A3AA" stroke-width="1.15" fill="none" stroke-linecap="round" stroke-linejoin="round" /></svg>
<svg class="i" style="left:50.5px;top:112px" width="16" height="16" viewBox="0 0 16 16" ><path d="M1.5 3.6c0-.6.5-1.1 1.1-1.1h3.3c.3 0 .6.1.8.4l1.1 1.4c.2.2.5.4.8.4h4.8c.6 0 1.1.5 1.1 1.1v6.6c0 .6-.5 1.1-1.1 1.1H2.6c-.6 0-1.1-.5-1.1-1.1z" fill="#43454A" stroke="#CED0D6" stroke-width="1" stroke-linejoin="round"/><rect x="7.500" y="7.500" width="9" height="9" fill="#2B2D30"/><rect x="9.500" y="9.500" width="6" height="6" rx="1.500" fill="#25324D" stroke="#548AF7" stroke-width="1"/></svg>
<span class="t " style="left:70.2px;top:110.5px;letter-spacing:0.076px;">day14</span>
<svg class="i" style="left:29.8px;top:134px" width="16" height="16" viewBox="0 0 16 16" ><path d="M5.9 4.2L9.7 8 5.9 11.8" stroke="#A0A3AA" stroke-width="1.15" fill="none" stroke-linecap="round" stroke-linejoin="round" /></svg>
<svg class="i" style="left:50.5px;top:134px" width="16" height="16" viewBox="0 0 16 16" ><path d="M1.5 3.6c0-.6.5-1.1 1.1-1.1h3.3c.3 0 .6.1.8.4l1.1 1.4c.2.2.5.4.8.4h4.8c.6 0 1.1.5 1.1 1.1v6.6c0 .6-.5 1.1-1.1 1.1H2.6c-.6 0-1.1-.5-1.1-1.1z" fill="#43454A" stroke="#CED0D6" stroke-width="1" stroke-linejoin="round"/><rect x="7.500" y="7.500" width="9" height="9" fill="#2B2D30"/><rect x="9.500" y="9.500" width="6" height="6" rx="1.500" fill="#25324D" stroke="#548AF7" stroke-width="1"/></svg>
<span class="t " style="left:70.2px;top:132.5px;letter-spacing:-0.024px;">day15</span>
<svg class="i" style="left:29.8px;top:156px" width="16" height="16" viewBox="0 0 16 16" ><path d="M5.9 4.2L9.7 8 5.9 11.8" stroke="#A0A3AA" stroke-width="1.15" fill="none" stroke-linecap="round" stroke-linejoin="round" /></svg>
<svg class="i" style="left:50.5px;top:156px" width="16" height="16" viewBox="0 0 16 16" ><path d="M1.5 3.6c0-.6.5-1.1 1.1-1.1h3.3c.3 0 .6.1.8.4l1.1 1.4c.2.2.5.4.8.4h4.8c.6 0 1.1.5 1.1 1.1v6.6c0 .6-.5 1.1-1.1 1.1H2.6c-.6 0-1.1-.5-1.1-1.1z" fill="#43454A" stroke="#CED0D6" stroke-width="1" stroke-linejoin="round"/><rect x="7.500" y="7.500" width="9" height="9" fill="#2B2D30"/><rect x="9.500" y="9.500" width="6" height="6" rx="1.500" fill="#25324D" stroke="#548AF7" stroke-width="1"/></svg>
<span class="t " style="left:70.2px;top:154.5px;letter-spacing:0.076px;">day16</span>
<svg class="i" style="left:29.8px;top:178px" width="16" height="16" viewBox="0 0 16 16" ><path d="M5.9 4.2L9.7 8 5.9 11.8" stroke="#A0A3AA" stroke-width="1.15" fill="none" stroke-linecap="round" stroke-linejoin="round" /></svg>
<svg class="i" style="left:50.5px;top:178px" width="16" height="16" viewBox="0 0 16 16" ><path d="M1.5 3.6c0-.6.5-1.1 1.1-1.1h3.3c.3 0 .6.1.8.4l1.1 1.4c.2.2.5.4.8.4h4.8c.6 0 1.1.5 1.1 1.1v6.6c0 .6-.5 1.1-1.1 1.1H2.6c-.6 0-1.1-.5-1.1-1.1z" fill="#43454A" stroke="#CED0D6" stroke-width="1" stroke-linejoin="round"/><rect x="7.500" y="7.500" width="9" height="9" fill="#2B2D30"/><rect x="9.500" y="9.500" width="6" height="6" rx="1.500" fill="#25324D" stroke="#548AF7" stroke-width="1"/></svg>
<span class="t " style="left:70.2px;top:176.5px;letter-spacing:-0.204px;">day17</span>
<svg class="i" style="left:29.8px;top:200px" width="16" height="16" viewBox="0 0 16 16" ><path d="M5.9 4.2L9.7 8 5.9 11.8" stroke="#A0A3AA" stroke-width="1.15" fill="none" stroke-linecap="round" stroke-linejoin="round" /></svg>
<svg class="i" style="left:50.5px;top:200px" width="16" height="16" viewBox="0 0 16 16" ><path d="M1.5 3.6c0-.6.5-1.1 1.1-1.1h3.3c.3 0 .6.1.8.4l1.1 1.4c.2.2.5.4.8.4h4.8c.6 0 1.1.5 1.1 1.1v6.6c0 .6-.5 1.1-1.1 1.1H2.6c-.6 0-1.1-.5-1.1-1.1z" fill="#43454A" stroke="#CED0D6" stroke-width="1" stroke-linejoin="round"/><rect x="7.500" y="7.500" width="9" height="9" fill="#2B2D30"/><rect x="9.500" y="9.500" width="6" height="6" rx="1.500" fill="#25324D" stroke="#548AF7" stroke-width="1"/></svg>
<span class="t " style="left:70.2px;top:198.5px;letter-spacing:0.036px;">day18</span>
<svg class="i" style="left:29.8px;top:222px" width="16" height="16" viewBox="0 0 16 16" ><path d="M4.6 6.4L8.2 10 11.8 6.4" stroke="#A0A3AA" stroke-width="1.15" fill="none" stroke-linecap="round" stroke-linejoin="round" /></svg>
<svg class="i" style="left:50.5px;top:222px" width="16" height="16" viewBox="0 0 16 16" ><path d="M1.5 3.6c0-.6.5-1.1 1.1-1.1h3.3c.3 0 .6.1.8.4l1.1 1.4c.2.2.5.4.8.4h4.8c.6 0 1.1.5 1.1 1.1v6.6c0 .6-.5 1.1-1.1 1.1H2.6c-.6 0-1.1-.5-1.1-1.1z" fill="#43454A" stroke="#CED0D6" stroke-width="1" stroke-linejoin="round"/><rect x="7.500" y="7.500" width="9" height="9" fill="#2B2D30"/><rect x="9.500" y="9.500" width="6" height="6" rx="1.500" fill="#25324D" stroke="#548AF7" stroke-width="1"/></svg>
<span class="t " style="left:70.2px;top:220.5px;letter-spacing:-0.044px;">day19</span>
<svg class="i" style="left:48.8px;top:244px" width="16" height="16" viewBox="0 0 16 16" ><path d="M4.6 6.4L8.2 10 11.8 6.4" stroke="#A0A3AA" stroke-width="1.15" fill="none" stroke-linecap="round" stroke-linejoin="round" /></svg>
<svg class="i" style="left:70.2px;top:244px" width="16" height="16" viewBox="0 0 16 16" ><path d="M1.5 3.6c0-.6.5-1.1 1.1-1.1h3.3c.3 0 .6.1.8.4l1.1 1.4c.2.2.5.4.8.4h4.8c.6 0 1.1.5 1.1 1.1v6.6c0 .6-.5 1.1-1.1 1.1H2.6c-.6 0-1.1-.5-1.1-1.1z" fill="#25324D" stroke="#548AF7" stroke-width="1" stroke-linejoin="round"/></svg>
<span class="t " style="left:89.2px;top:242.5px;letter-spacing:0.085px;">src</span>
<svg class="i" style="left:67.8px;top:266px" width="16" height="16" viewBox="0 0 16 16" ><path d="M4.6 6.4L8.2 10 11.8 6.4" stroke="#A0A3AA" stroke-width="1.15" fill="none" stroke-linecap="round" stroke-linejoin="round" /></svg>
<svg class="i" style="left:89.2px;top:266px" width="16" height="16" viewBox="0 0 16 16" ><path d="M1.5 3.6c0-.6.5-1.1 1.1-1.1h3.3c.3 0 .6.1.8.4l1.1 1.4c.2.2.5.4.8.4h4.8c.6 0 1.1.5 1.1 1.1v6.6c0 .6-.5 1.1-1.1 1.1H2.6c-.6 0-1.1-.5-1.1-1.1z" fill="#393B40" stroke="#CED0D6" stroke-width="1" stroke-linejoin="round"/><circle cx="5.800" cy="9.300" r="1.700" stroke="#CED0D6" fill="none"/></svg>
<span class="t " style="left:108.2px;top:264.5px;letter-spacing:0.079px;">com</span>
<svg class="i" style="left:86.8px;top:288px" width="16" height="16" viewBox="0 0 16 16" ><path d="M4.6 6.4L8.2 10 11.8 6.4" stroke="#A0A3AA" stroke-width="1.15" fill="none" stroke-linecap="round" stroke-linejoin="round" /></svg>
<svg class="i" style="left:108.2px;top:288px" width="16" height="16" viewBox="0 0 16 16" ><path d="M1.5 3.6c0-.6.5-1.1 1.1-1.1h3.3c.3 0 .6.1.8.4l1.1 1.4c.2.2.5.4.8.4h4.8c.6 0 1.1.5 1.1 1.1v6.6c0 .6-.5 1.1-1.1 1.1H2.6c-.6 0-1.1-.5-1.1-1.1z" fill="#393B40" stroke="#CED0D6" stroke-width="1" stroke-linejoin="round"/><circle cx="5.800" cy="9.300" r="1.700" stroke="#CED0D6" fill="none"/></svg>
<span class="t " style="left:127.2px;top:286.5px;letter-spacing:0.313px;">github</span>
<svg class="i" style="left:105.8px;top:310px" width="16" height="16" viewBox="0 0 16 16" ><path d="M4.6 6.4L8.2 10 11.8 6.4" stroke="#A0A3AA" stroke-width="1.15" fill="none" stroke-linecap="round" stroke-linejoin="round" /></svg>
<svg class="i" style="left:127.2px;top:310px" width="16" height="16" viewBox="0 0 16 16" ><path d="M1.5 3.6c0-.6.5-1.1 1.1-1.1h3.3c.3 0 .6.1.8.4l1.1 1.4c.2.2.5.4.8.4h4.8c.6 0 1.1.5 1.1 1.1v6.6c0 .6-.5 1.1-1.1 1.1H2.6c-.6 0-1.1-.5-1.1-1.1z" fill="#393B40" stroke="#CED0D6" stroke-width="1" stroke-linejoin="round"/><circle cx="5.800" cy="9.300" r="1.700" stroke="#CED0D6" fill="none"/></svg>
<span class="t " style="left:146.2px;top:308.5px;letter-spacing:0.260px;">exception</span>
<svg class="i" style="left:146.5px;top:332px" width="16" height="16" viewBox="0 0 16 16" ><circle cx="7.5" cy="8" r="6.6" fill="#25324D" stroke="#548AF7" stroke-width="1.15"/><path d="M9.8 6.3C9.3 5.5 8.5 5 7.5 5 5.8 5 4.5 6.3 4.5 8.1s1.3 3.1 3 3.1c1 0 1.9-.5 2.3-1.3" stroke="#548AF7" stroke-width="1.15" fill="none" stroke-linecap="round" stroke-linejoin="round" /><path d="M8.2 -.6v9l8-4.5z" fill="#2B2D30"/><path d="M9.3 .8v6.6l5.9-3.3z" fill="#1F3522" stroke="#57965C" stroke-width="1.15" stroke-linejoin="round"/></svg>
<svg class="i" style="left:162.5px;top:332px" width="16" height="16" viewBox="0 0 16 16" ><rect x="5" y="7.500" width="5.300" height="4" rx=".8" stroke="#57965C" stroke-width="1.15" fill="#1F3522"/><path d="M9.1 7.5V6.1c0-1 .7-1.6 1.5-1.6s1.5.6 1.5 1.6v1.5" stroke="#57965C" stroke-width="1.15" fill="none" stroke-linecap="round" stroke-linejoin="round" /></svg>
<span class="t " style="left:181.2px;top:330.5px;color:#73BD79;letter-spacing:0.429px;">ArithmeticExceptionTest</span>
<svg class="i" style="left:146.5px;top:354px" width="16" height="16" viewBox="0 0 16 16" ><circle cx="7.5" cy="8" r="6.6" fill="#25324D" stroke="#548AF7" stroke-width="1.15"/><path d="M9.8 6.3C9.3 5.5 8.5 5 7.5 5 5.8 5 4.5 6.3 4.5 8.1s1.3 3.1 3 3.1c1 0 1.9-.5 2.3-1.3" stroke="#548AF7" stroke-width="1.15" fill="none" stroke-linecap="round" stroke-linejoin="round" /><path d="M8.2 -.6v9l8-4.5z" fill="#2B2D30"/><path d="M9.3 .8v6.6l5.9-3.3z" fill="#1F3522" stroke="#57965C" stroke-width="1.15" stroke-linejoin="round"/></svg>
<svg class="i" style="left:162.5px;top:354px" width="16" height="16" viewBox="0 0 16 16" ><rect x="5" y="7.500" width="5.300" height="4" rx=".8" stroke="#57965C" stroke-width="1.15" fill="#1F3522"/><path d="M9.1 7.5V6.1c0-1 .7-1.6 1.5-1.6s1.5.6 1.5 1.6v1.5" stroke="#57965C" stroke-width="1.15" fill="none" stroke-linecap="round" stroke-linejoin="round" /></svg>
<span class="t " style="left:181.2px;top:352.5px;color:#73BD79;letter-spacing:0.304px;">ArrayIndexOutOfBoundsExceptionTest</span>
<svg class="i" style="left:146.5px;top:376px" width="16" height="16" viewBox="0 0 16 16" ><circle cx="7.5" cy="8" r="6.6" fill="#25324D" stroke="#548AF7" stroke-width="1.15"/><path d="M9.8 6.3C9.3 5.5 8.5 5 7.5 5 5.8 5 4.5 6.3 4.5 8.1s1.3 3.1 3 3.1c1 0 1.9-.5 2.3-1.3" stroke="#548AF7" stroke-width="1.15" fill="none" stroke-linecap="round" stroke-linejoin="round" /><path d="M8.2 -.6v9l8-4.5z" fill="#2B2D30"/><path d="M9.3 .8v6.6l5.9-3.3z" fill="#1F3522" stroke="#57965C" stroke-width="1.15" stroke-linejoin="round"/></svg>
<svg class="i" style="left:162.5px;top:376px" width="16" height="16" viewBox="0 0 16 16" ><rect x="5" y="7.500" width="5.300" height="4" rx=".8" stroke="#57965C" stroke-width="1.15" fill="#1F3522"/><path d="M9.1 7.5V6.1c0-1 .7-1.6 1.5-1.6s1.5.6 1.5 1.6v1.5" stroke="#57965C" stroke-width="1.15" fill="none" stroke-linecap="round" stroke-linejoin="round" /></svg>
<span class="t " style="left:181.2px;top:374.5px;color:#73BD79;letter-spacing:0.514px;">Test</span>
<svg class="i" style="left:29.8px;top:398px" width="16" height="16" viewBox="0 0 16 16" ><path d="M5.9 4.2L9.7 8 5.9 11.8" stroke="#A0A3AA" stroke-width="1.15" fill="none" stroke-linecap="round" stroke-linejoin="round" /></svg>
<svg class="i" style="left:50.5px;top:398px" width="16" height="16" viewBox="0 0 16 16" ><path d="M1.5 3.6c0-.6.5-1.1 1.1-1.1h3.3c.3 0 .6.1.8.4l1.1 1.4c.2.2.5.4.8.4h4.8c.6 0 1.1.5 1.1 1.1v6.6c0 .6-.5 1.1-1.1 1.1H2.6c-.6 0-1.1-.5-1.1-1.1z" fill="#43454A" stroke="#CED0D6" stroke-width="1" stroke-linejoin="round"/><rect x="7.500" y="7.500" width="9" height="9" fill="#2B2D30"/><rect x="9.500" y="9.500" width="6" height="6" rx="1.500" fill="#25324D" stroke="#548AF7" stroke-width="1"/></svg>
<span class="t " style="left:70.2px;top:396.5px;letter-spacing:0.196px;">day20</span>
<svg class="i" style="left:29.8px;top:420px" width="16" height="16" viewBox="0 0 16 16" ><path d="M5.9 4.2L9.7 8 5.9 11.8" stroke="#A0A3AA" stroke-width="1.15" fill="none" stroke-linecap="round" stroke-linejoin="round" /></svg>
<svg class="i" style="left:50.5px;top:420px" width="16" height="16" viewBox="0 0 16 16" ><path d="M1.5 3.6c0-.6.5-1.1 1.1-1.1h3.3c.3 0 .6.1.8.4l1.1 1.4c.2.2.5.4.8.4h4.8c.6 0 1.1.5 1.1 1.1v6.6c0 .6-.5 1.1-1.1 1.1H2.6c-.6 0-1.1-.5-1.1-1.1z" fill="#43454A" stroke="#CED0D6" stroke-width="1" stroke-linejoin="round"/><rect x="7.500" y="7.500" width="9" height="9" fill="#2B2D30"/><rect x="9.500" y="9.500" width="6" height="6" rx="1.500" fill="#25324D" stroke="#548AF7" stroke-width="1"/></svg>
<span class="t " style="left:70.2px;top:418.5px;letter-spacing:-0.244px;">day21</span>
<svg class="i" style="left:29.8px;top:442px" width="16" height="16" viewBox="0 0 16 16" ><path d="M5.9 4.2L9.7 8 5.9 11.8" stroke="#A0A3AA" stroke-width="1.15" fill="none" stroke-linecap="round" stroke-linejoin="round" /></svg>
<svg class="i" style="left:50.5px;top:442px" width="16" height="16" viewBox="0 0 16 16" ><path d="M1.5 3.6c0-.6.5-1.1 1.1-1.1h3.3c.3 0 .6.1.8.4l1.1 1.4c.2.2.5.4.8.4h4.8c.6 0 1.1.5 1.1 1.1v6.6c0 .6-.5 1.1-1.1 1.1H2.6c-.6 0-1.1-.5-1.1-1.1z" fill="#43454A" stroke="#CED0D6" stroke-width="1" stroke-linejoin="round"/><rect x="7.500" y="7.500" width="9" height="9" fill="#2B2D30"/><rect x="9.500" y="9.500" width="6" height="6" rx="1.500" fill="#25324D" stroke="#548AF7" stroke-width="1"/></svg>
<span class="t " style="left:70.2px;top:440.5px;letter-spacing:0.096px;">day22</span>
<svg class="i" style="left:29.8px;top:464px" width="16" height="16" viewBox="0 0 16 16" ><path d="M5.9 4.2L9.7 8 5.9 11.8" stroke="#A0A3AA" stroke-width="1.15" fill="none" stroke-linecap="round" stroke-linejoin="round" /></svg>
<svg class="i" style="left:50.5px;top:464px" width="16" height="16" viewBox="0 0 16 16" ><path d="M1.5 3.6c0-.6.5-1.1 1.1-1.1h3.3c.3 0 .6.1.8.4l1.1 1.4c.2.2.5.4.8.4h4.8c.6 0 1.1.5 1.1 1.1v6.6c0 .6-.5 1.1-1.1 1.1H2.6c-.6 0-1.1-.5-1.1-1.1z" fill="#43454A" stroke="#CED0D6" stroke-width="1" stroke-linejoin="round"/><rect x="7.500" y="7.500" width="9" height="9" fill="#2B2D30"/><rect x="9.500" y="9.500" width="6" height="6" rx="1.500" fill="#25324D" stroke="#548AF7" stroke-width="1"/></svg>
<span class="t " style="left:70.2px;top:462.5px;letter-spacing:0.096px;">day23</span>
<svg class="i" style="left:29.8px;top:486px" width="16" height="16" viewBox="0 0 16 16" ><path d="M5.9 4.2L9.7 8 5.9 11.8" stroke="#A0A3AA" stroke-width="1.15" fill="none" stroke-linecap="round" stroke-linejoin="round" /></svg>
<svg class="i" style="left:50.5px;top:486px" width="16" height="16" viewBox="0 0 16 16" ><path d="M1.5 3.6c0-.6.5-1.1 1.1-1.1h3.3c.3 0 .6.1.8.4l1.1 1.4c.2.2.5.4.8.4h4.8c.6 0 1.1.5 1.1 1.1v6.6c0 .6-.5 1.1-1.1 1.1H2.6c-.6 0-1.1-.5-1.1-1.1z" fill="#43454A" stroke="#CED0D6" stroke-width="1" stroke-linejoin="round"/><rect x="7.500" y="7.500" width="9" height="9" fill="#2B2D30"/><rect x="9.500" y="9.500" width="6" height="6" rx="1.500" fill="#25324D" stroke="#548AF7" stroke-width="1"/></svg>
<span class="t " style="left:70.2px;top:484.5px;letter-spacing:0.196px;">day24</span>
<svg class="i" style="left:29.8px;top:508px" width="16" height="16" viewBox="0 0 16 16" ><path d="M5.9 4.2L9.7 8 5.9 11.8" stroke="#A0A3AA" stroke-width="1.15" fill="none" stroke-linecap="round" stroke-linejoin="round" /></svg>
<svg class="i" style="left:50.5px;top:508px" width="16" height="16" viewBox="0 0 16 16" ><path d="M1.5 3.6c0-.6.5-1.1 1.1-1.1h3.3c.3 0 .6.1.8.4l1.1 1.4c.2.2.5.4.8.4h4.8c.6 0 1.1.5 1.1 1.1v6.6c0 .6-.5 1.1-1.1 1.1H2.6c-.6 0-1.1-.5-1.1-1.1z" fill="#43454A" stroke="#CED0D6" stroke-width="1" stroke-linejoin="round"/><rect x="7.500" y="7.500" width="9" height="9" fill="#2B2D30"/><rect x="9.500" y="9.500" width="6" height="6" rx="1.500" fill="#25324D" stroke="#548AF7" stroke-width="1"/></svg>
<span class="t " style="left:70.2px;top:506.5px;letter-spacing:0.096px;">day25</span>
<svg class="i" style="left:29.8px;top:530px" width="16" height="16" viewBox="0 0 16 16" ><path d="M5.9 4.2L9.7 8 5.9 11.8" stroke="#A0A3AA" stroke-width="1.15" fill="none" stroke-linecap="round" stroke-linejoin="round" /></svg>
<svg class="i" style="left:50.5px;top:530px" width="16" height="16" viewBox="0 0 16 16" ><path d="M1.5 3.6c0-.6.5-1.1 1.1-1.1h3.3c.3 0 .6.1.8.4l1.1 1.4c.2.2.5.4.8.4h4.8c.6 0 1.1.5 1.1 1.1v6.6c0 .6-.5 1.1-1.1 1.1H2.6c-.6 0-1.1-.5-1.1-1.1z" fill="#43454A" stroke="#CED0D6" stroke-width="1" stroke-linejoin="round"/><rect x="7.500" y="7.500" width="9" height="9" fill="#2B2D30"/><rect x="9.500" y="9.500" width="6" height="6" rx="1.500" fill="#25324D" stroke="#548AF7" stroke-width="1"/></svg>
<span class="t " style="left:70.2px;top:528.5px;letter-spacing:0.196px;">day26</span>
<svg class="i" style="left:29.8px;top:552px" width="16" height="16" viewBox="0 0 16 16" ><path d="M5.9 4.2L9.7 8 5.9 11.8" stroke="#A0A3AA" stroke-width="1.15" fill="none" stroke-linecap="round" stroke-linejoin="round" /></svg>
<svg class="i" style="left:50.5px;top:552px" width="16" height="16" viewBox="0 0 16 16" ><path d="M1.5 3.6c0-.6.5-1.1 1.1-1.1h3.3c.3 0 .6.1.8.4l1.1 1.4c.2.2.5.4.8.4h4.8c.6 0 1.1.5 1.1 1.1v6.6c0 .6-.5 1.1-1.1 1.1H2.6c-.6 0-1.1-.5-1.1-1.1z" fill="#43454A" stroke="#CED0D6" stroke-width="1" stroke-linejoin="round"/><rect x="7.500" y="7.500" width="9" height="9" fill="#2B2D30"/><rect x="9.500" y="9.500" width="6" height="6" rx="1.500" fill="#25324D" stroke="#548AF7" stroke-width="1"/></svg>
<span class="t " style="left:70.2px;top:550.5px;letter-spacing:0.016px;">day27</span>
<svg class="i" style="left:29.8px;top:574px" width="16" height="16" viewBox="0 0 16 16" ><path d="M5.9 4.2L9.7 8 5.9 11.8" stroke="#A0A3AA" stroke-width="1.15" fill="none" stroke-linecap="round" stroke-linejoin="round" /></svg>
<svg class="i" style="left:50.5px;top:574px" width="16" height="16" viewBox="0 0 16 16" ><path d="M1.5 3.6c0-.6.5-1.1 1.1-1.1h3.3c.3 0 .6.1.8.4l1.1 1.4c.2.2.5.4.8.4h4.8c.6 0 1.1.5 1.1 1.1v6.6c0 .6-.5 1.1-1.1 1.1H2.6c-.6 0-1.1-.5-1.1-1.1z" fill="#43454A" stroke="#CED0D6" stroke-width="1" stroke-linejoin="round"/><rect x="7.500" y="7.500" width="9" height="9" fill="#2B2D30"/><rect x="9.500" y="9.500" width="6" height="6" rx="1.500" fill="#25324D" stroke="#548AF7" stroke-width="1"/></svg>
<span class="t " style="left:70.2px;top:572.5px;letter-spacing:0.196px;">day28</span>
<svg class="i" style="left:29.8px;top:596px" width="16" height="16" viewBox="0 0 16 16" ><path d="M5.9 4.2L9.7 8 5.9 11.8" stroke="#A0A3AA" stroke-width="1.15" fill="none" stroke-linecap="round" stroke-linejoin="round" /></svg>
<svg class="i" style="left:50.5px;top:596px" width="16" height="16" viewBox="0 0 16 16" ><path d="M1.5 3.6c0-.6.5-1.1 1.1-1.1h3.3c.3 0 .6.1.8.4l1.1 1.4c.2.2.5.4.8.4h4.8c.6 0 1.1.5 1.1 1.1v6.6c0 .6-.5 1.1-1.1 1.1H2.6c-.6 0-1.1-.5-1.1-1.1z" fill="#43454A" stroke="#CED0D6" stroke-width="1" stroke-linejoin="round"/><rect x="7.500" y="7.500" width="9" height="9" fill="#2B2D30"/><rect x="9.500" y="9.500" width="6" height="6" rx="1.500" fill="#25324D" stroke="#548AF7" stroke-width="1"/></svg>
<span class="t " style="left:70.2px;top:594.5px;letter-spacing:0.176px;">day29</span>
<svg class="i" style="left:29.8px;top:618px" width="16" height="16" viewBox="0 0 16 16" ><path d="M5.9 4.2L9.7 8 5.9 11.8" stroke="#A0A3AA" stroke-width="1.15" fill="none" stroke-linecap="round" stroke-linejoin="round" /></svg>
<svg class="i" style="left:50.5px;top:618px" width="16" height="16" viewBox="0 0 16 16" ><path d="M1.5 3.6c0-.6.5-1.1 1.1-1.1h3.3c.3 0 .6.1.8.4l1.1 1.4c.2.2.5.4.8.4h4.8c.6 0 1.1.5 1.1 1.1v6.6c0 .6-.5 1.1-1.1 1.1H2.6c-.6 0-1.1-.5-1.1-1.1z" fill="#43454A" stroke="#CED0D6" stroke-width="1" stroke-linejoin="round"/><rect x="7.500" y="7.500" width="9" height="9" fill="#2B2D30"/><rect x="9.500" y="9.500" width="6" height="6" rx="1.500" fill="#25324D" stroke="#548AF7" stroke-width="1"/></svg>
<span class="t " style="left:70.2px;top:616.5px;letter-spacing:0.256px;">day30</span>
<svg class="i" style="left:29.8px;top:640px" width="16" height="16" viewBox="0 0 16 16" ><path d="M5.9 4.2L9.7 8 5.9 11.8" stroke="#A0A3AA" stroke-width="1.15" fill="none" stroke-linecap="round" stroke-linejoin="round" /></svg>
<svg class="i" style="left:51px;top:640px" width="16" height="16" viewBox="0 0 16 16" ><path d="M1.5 3.6c0-.6.5-1.1 1.1-1.1h3.3c.3 0 .6.1.8.4l1.1 1.4c.2.2.5.4.8.4h4.8c.6 0 1.1.5 1.1 1.1v6.6c0 .6-.5 1.1-1.1 1.1H2.6c-.6 0-1.1-.5-1.1-1.1z" fill="#43454A" stroke="#CED0D6" stroke-width="1" stroke-linejoin="round"/></svg>
<span class="t " style="left:70.2px;top:638.5px;letter-spacing:0.061px;">lib</span>
<svg class="i" style="left:29.8px;top:662px" width="16" height="16" viewBox="0 0 16 16" ><path d="M5.9 4.2L9.7 8 5.9 11.8" stroke="#A0A3AA" stroke-width="1.15" fill="none" stroke-linecap="round" stroke-linejoin="round" /></svg>
<svg class="i" style="left:51px;top:662px" width="16" height="16" viewBox="0 0 16 16" ><path d="M1.5 3.6c0-.6.5-1.1 1.1-1.1h3.3c.3 0 .6.1.8.4l1.1 1.4c.2.2.5.4.8.4h4.8c.6 0 1.1.5 1.1 1.1v6.6c0 .6-.5 1.1-1.1 1.1H2.6c-.6 0-1.1-.5-1.1-1.1z" fill="#45322B" stroke="#C77D55" stroke-width="1" stroke-linejoin="round"/></svg>
<span class="t " style="left:70.2px;top:660.5px;color:#C77D55;letter-spacing:0.341px;">out</span>
<svg class="i" style="left:51px;top:684px" width="16" height="16" viewBox="0 0 16 16" ><circle cx="8" cy="8" r="6.5" stroke="#CED0D6" stroke-width="1" fill="none"/><path d="M3.5 12.5l9-9" stroke="#CED0D6" stroke-width="1.15" fill="none" stroke-linecap="round" stroke-linejoin="round" /></svg>
<span class="t " style="left:70.2px;top:682.5px;letter-spacing:0.232px;">.gitignore</span>
<svg class="i" style="left:10.8px;top:706px" width="16" height="16" viewBox="0 0 16 16" ><path d="M5.9 4.2L9.7 8 5.9 11.8" stroke="#A0A3AA" stroke-width="1.15" fill="none" stroke-linecap="round" stroke-linejoin="round" /></svg>
<svg class="i" style="left:32.5px;top:706px" width="16" height="16" viewBox="0 0 16 16" ><path d="M2 14V6.5h3.8V14M5.8 14V2.5H10V14M10 14V5.5h4V14zM2 14h12" stroke="#CED0D6" stroke-width="1.15" fill="none" stroke-linecap="round" stroke-linejoin="round" /></svg>
<span class="t " style="left:51.4px;top:704.3px;letter-spacing:1.000px;"><span class="z">外部库</span></span>
<svg class="i" style="left:10.8px;top:728px" width="16" height="16" viewBox="0 0 16 16" ><path d="M5.9 4.2L9.7 8 5.9 11.8" stroke="#A0A3AA" stroke-width="1.15" fill="none" stroke-linecap="round" stroke-linejoin="round" /></svg>
<svg class="i" style="left:32.5px;top:728px" width="16" height="16" viewBox="0 0 16 16" ><path d="M2 4h5M2 7h8M2 10h11.5M2 13h8" stroke="#CED0D6" stroke-width="1.15" fill="none" stroke-linecap="round" stroke-linejoin="round" /><circle cx="12.300" cy="3.700" r="3.500" fill="#548AF7"/><path d="M12.3 1.8v2.1l1.4.9" stroke="#fff" stroke-width="1" fill="none" stroke-linecap="round" stroke-linejoin="round" /></svg>
<span class="t " style="left:51.4px;top:726.3px;letter-spacing:0.975px;"><span class="z">临时文件和控制台</span></span>
</div>
<div class="a" style="left:321px;top:282px;width:8px;height:576px;background:rgba(255,255,255,0.16)"></div>
<div class="a" style="left:34px;top:860px;width:188px;height:8px;background:rgba(255,255,255,0.16)"></div>
<div class="hl" style="left:0;top:869px;width:1546px"></div>
<!-- ===== editor ===== -->
<div id="editor"></div>
<svg class="i" style="left:335.3px;top:71.7px" width="16" height="16" viewBox="0 0 16 16" ><circle cx="7.5" cy="8" r="6.6" fill="#25324D" stroke="#548AF7" stroke-width="1.15"/><path d="M9.8 6.3C9.3 5.5 8.5 5 7.5 5 5.8 5 4.5 6.3 4.5 8.1s1.3 3.1 3 3.1c1 0 1.9-.5 2.3-1.3" stroke="#548AF7" stroke-width="1.15" fill="none" stroke-linecap="round" stroke-linejoin="round" /><path d="M8.2 -.6v9l8-4.5z" fill="#1E1F22"/><path d="M9.3 .8v6.6l5.9-3.3z" fill="#1F3522" stroke="#57965C" stroke-width="1.15" stroke-linejoin="round"/></svg>
<span class="t " style="left:356.6px;top:70px;color:#73BD79;font-size:12.5px;">Test.java</span>
<div class="a" style="left:412.5px;top:77.5px;width:6.5px;height:6.5px;border-radius:50%;background:#548AF7"></div>
<div class="a" style="left:330px;top:95px;width:1183px;height:1px;background:#393B40"></div>
<div class="a" style="left:331px;top:93px;width:96px;height:3px;border-radius:1.5px;background:#3574F0"></div>
<svg class="i" style="left:1486px;top:72px" width="16" height="16" viewBox="0 0 16 16" ><path d="M8 2.2a1.1 1.1 0 1 0 0 2.2 1.1 1.1 0 0 0 0-2.2zM8 6.9a1.1 1.1 0 1 0 0 2.2 1.1 1.1 0 0 0 0-2.2zM8 11.6a1.1 1.1 0 1 0 0 2.2 1.1 1.1 0 0 0 0-2.2z" fill="#CED0D6" /></svg>
<div class="a" style="left:385px;top:251px;width:1018px;height:20px;background:#292722"></div>
<div class="a" style="left:330px;top:311px;width:1073px;height:20px;background:#26282E"></div>
<div class="a" style="left:384px;top:96px;width:1px;height:749px;background:#313438"></div>
<div class="a" style="left:1347px;top:120px;width:1px;height:725px;background:#313438"></div>
<div class="a" style="left:330px;top:845px;width:1183px;height:1px;background:#313438"></div>
<div class="a" style="left:417px;top:191px;width:1px;height:80px;background:#37553A"></div>
<span class="ln" style="left:330px;top:96px;width:20.5px;">1</span>
<span class="ln" style="left:330px;top:116px;width:20.5px;">2</span>
<span class="ln" style="left:330px;top:136px;width:20.5px;">3</span>
<span class="ln" style="left:330px;top:171px;width:20.5px;">4</span>
<span class="ln" style="left:330px;top:191px;width:20.5px;">5</span>
<span class="ln" style="left:330px;top:211px;width:20.5px;">6</span>
<span class="ln" style="left:330px;top:231px;width:20.5px;">7</span>
<span class="ln" style="left:330px;top:251px;width:20.5px;">8</span>
<span class="ln" style="left:330px;top:271px;width:20.5px;">9</span>
<span class="ln" style="left:330px;top:291px;width:20.5px;">10</span>
<span class="ln" style="left:330px;top:311px;width:20.5px;color:#CED0D6;font-weight:bold;">11</span>
<svg class="i" style="left:353.2px;top:137.5px" width="16" height="16" viewBox="0 0 16 16" ><path d="M2.6 1.9v12.2L13.3 8z" fill="#233B27" stroke="#57965C" stroke-width="1.2" stroke-linejoin="round"/></svg>
<svg class="i" style="left:353.2px;top:172.5px" width="16" height="16" viewBox="0 0 16 16" ><path d="M2.6 1.9v12.2L13.3 8z" fill="#233B27" stroke="#57965C" stroke-width="1.2" stroke-linejoin="round"/></svg>
<span class="code" style="left:386.9px;top:95.6px;"><span class="k">package</span> com.github.exception;</span>
<span class="code" style="left:386.9px;top:135.6px;"><span class="k">public</span> <span class="k">class</span> Test <span class="b1">{</span></span>
<span class="code hint" style="left:552.5px;top:135.6px;font-size:12px;">新 *</span>
<svg class="i" style="left:419px;top:157px" width="13" height="13" viewBox="0 0 16 16" ><path d="M5.1 .2l3.5.2.8 1.6 4.3.2 1.1 1.9-.5 1.8 1.6 3.5-1.1 1.9-2.4.8-1.9 3.5H7.6l-1.1-1.9H2.2l-1.1-1.8.5-2.5L0 6.2l1.1-2.1 2.7-.8z" fill="#75787E" /><path d="M5.4 2.3V5h8.6M3 4.6l3.5 7.6H3.8M12.7 6.8L8.1 14M12.7 6.8l2.1 2.1" stroke="#1E1F22" stroke-width="1.2" fill="none" stroke-linecap="round" stroke-linejoin="round" /></svg>
<svg class="i" style="left:433px;top:158.5px" width="11" height="11" viewBox="0 0 16 16" ><path d="M4 6l4 4 4-4" stroke="#9DA0A8" stroke-width="1.7" fill="none" stroke-linecap="round" stroke-linejoin="round" /></svg>
<span class="code" style="left:418.9px;top:170.6px;"><span class="k">public</span> <span class="k">static</span> <span class="k">void</span> <span class="m">main</span><span class="b1">(</span>String<span class="b1">[]</span> args<span class="b1">)</span> <span class="b2">{</span></span>
<span class="code hint" style="left:752.5px;top:170.6px;font-size:12px;">新 *</span>
<span class="code" style="left:450.9px;top:190.6px;"><span class="k">int</span><span class="b1">[]</span> arr = <span class="b3">{</span><span class="n">1</span>, <span class="n">2</span>, <span class="n">3</span><span class="b3">}</span>;</span>
<span class="code" style="left:450.9px;top:230.6px;"><span class="c">// <span class="zc">运行时异常</span></span></span>
<span class="code" style="left:450.9px;top:250.6px;">System.<span class="f">out</span>.println<span class="b1">(</span>arr<span class="b1">[</span><span class="n w">3</span><span class="b1">]</span><span class="b1">)</span>;</span>
<svg class="i" style="left:635px;top:265px" width="9" height="4" viewBox="0 0 9 4"><path d="M0 3.5l1.5-2 1.5 2 1.5-2 1.5 2 1.5-2 1.5 2" stroke="#A89A55" stroke-width="1.1" fill="none"/></svg>
<span class="t warnhint" style="left:681.5px;top:250.5px;color:#E2B93D;-webkit-text-stroke:0;letter-spacing:0.017px;"><span class="z">数组索引超出范围</span><span class="dot">.</span></span>
<span class="code" style="left:418.9px;top:270.6px;"><span class="b2">}</span></span>
<span class="code" style="left:386.9px;top:290.6px;"><span class="b1">}</span></span>
<span class="code blame" style="left:411.7px;top:310.6px;">You, A minute ago • Uncommitted changes</span>
<svg class="i" style="left:1310px;top:101.5px" width="14" height="14" viewBox="0 0 16 16" ><path d="M1 8.2C2.5 5.6 5 4 8 4s5.5 1.6 7 4.2c-1.5 2.5-4 4-7 4s-5.5-1.5-7-4z" stroke="#DFE1E5" stroke-width="1.5" fill="none" stroke-linecap="round" stroke-linejoin="round" /><circle cx="8" cy="8.1" r="2" stroke="#DFE1E5" stroke-width="1.4" fill="none"/><path d="M2.5 13.5L13.5 2.5" stroke="#1E1F22" stroke-width="3.2" fill="none" stroke-linecap="round" stroke-linejoin="round" /><path d="M2.5 13.5L13.5 2.5" stroke="#DFE1E5" stroke-width="1.5" fill="none" stroke-linecap="round" stroke-linejoin="round" /></svg>
<svg class="i" style="left:1337.55px;top:102.25px" width="12.5" height="12.5" viewBox="0 0 16 16" ><path d="M8 1.8L14.8 13.5H1.2z" fill="#D6AE58" stroke="#D6AE58" stroke-width="1.800" stroke-linejoin="round"/><path d="M8 5.5v4" stroke="#1E1F22" stroke-width="1.7" fill="none" stroke-linecap="round" stroke-linejoin="round" /><path d="M8 10.8a1 1 0 1 0 0 2 1 1 0 0 0 0-2z" fill="#1E1F22" /></svg>
<span class="t " style="left:1353px;top:98.7px;color:#CED0D6;font-size:12.5px;-webkit-text-stroke:0.15px currentColor;letter-spacing:-1.200px;">1</span>
<svg class="i" style="left:1367px;top:101.5px" width="14" height="14" viewBox="0 0 16 16" ><path d="M4 10l4-4 4 4" stroke="#B4B8BF" stroke-width="1.1" fill="none" stroke-linecap="round" stroke-linejoin="round" /></svg>
<svg class="i" style="left:1388px;top:101.5px" width="14" height="14" viewBox="0 0 16 16" ><path d="M4 6l4 4 4-4" stroke="#B4B8BF" stroke-width="1.1" fill="none" stroke-linecap="round" stroke-linejoin="round" /></svg>
<div class="a" style="left:1393px;top:162px;width:10px;height:2px;background:#4FE020"></div>
<div class="a" style="left:1393px;top:277px;width:10px;height:2px;background:#D6AE58"></div>
<div class="a" style="left:1403px;top:96px;width:110px;height:149px;background:#313335;border-radius:0 0 4px 4px"></div>
<div class="a" style="left:1403px;top:97px;width:7px;height:3px;background:#8A6A5A;opacity:.85"></div>
<div class="a" style="left:1411px;top:97px;width:21px;height:3px;background:#7A7C80;opacity:.85"></div>
<div class="a" style="left:1411px;top:116px;width:5px;height:3px;background:#8A6A5A;opacity:.85"></div>
<div class="a" style="left:1417px;top:116px;width:3px;height:3px;background:#7A7C80;opacity:.85"></div>
<div class="a" style="left:1421px;top:116px;width:1px;height:3px;background:#7A7C80;opacity:.85"></div>
<div class="a" style="left:1423px;top:116px;width:3px;height:3px;background:#3E7A96;opacity:.85"></div>
<div class="a" style="left:1427px;top:116px;width:2px;height:3px;background:#3E7A96;opacity:.85"></div>
<div class="a" style="left:1430px;top:116px;width:3px;height:3px;background:#3E7A96;opacity:.85"></div>
<div class="a" style="left:1411px;top:124px;width:2px;height:3px;background:#A8567A;opacity:.85"></div>
<div class="a" style="left:1414px;top:124px;width:5px;height:3px;background:#6E4153;opacity:.85"></div>
<div class="a" style="left:1411px;top:128px;width:23px;height:3px;background:#7A7C80;opacity:.85"></div>
<div class="a" style="left:1418px;top:128px;width:3px;height:3px;background:#8A5E86;opacity:.85"></div>
<div class="a" style="left:1434px;top:128px;width:15px;height:4px;background:#D6AE58;opacity:.85"></div>
<div class="a" style="left:1407px;top:132px;width:1px;height:3px;background:#3E6B42;opacity:.85"></div>
<div class="a" style="left:1403px;top:136px;width:1px;height:3px;background:#9A7F3C;opacity:.85"></div>
<div class="a" style="left:1403px;top:139px;width:110px;height:4px;background:#375390"></div>
<span class="a" style="left:1405px;top:105px;font-family:'Liberation Mono',monospace;font-weight:bold;font-size:9.5px;line-height:10px;letter-spacing:0.2px;color:#4CC24A;white-space:nowrap">Test</span>
<!-- ===== status bar / navigation bar ===== -->
<div class="a" style="left:0;top:870px;width:1546px;height:23px;background:#2B2D30"></div>
<svg class="i" style="left:10px;top:873.5px" width="16" height="16" viewBox="0 0 16 16" ><rect x="4.600" y="4.700" width="7" height="7.200" rx="1.500" fill="#25324D" stroke="#548AF7" stroke-width="1.1"/></svg>
<span class="t " style="left:25.7px;top:871.4px;color:#B0B4BC;letter-spacing:-0.508px;">java-base</span>
<svg class="i" style="left:98px;top:873.5px" width="16" height="16" viewBox="0 0 16 16" ><rect x="4.600" y="4.700" width="7" height="7.200" rx="1.500" fill="#25324D" stroke="#548AF7" stroke-width="1.1"/></svg>
<span class="t " style="left:114.3px;top:871.4px;color:#B0B4BC;letter-spacing:-0.804px;">day19</span>
<span class="t " style="left:170px;top:871.4px;color:#B0B4BC;letter-spacing:-0.115px;">src</span>
<span class="t " style="left:211px;top:871.4px;color:#B0B4BC;letter-spacing:-0.454px;">com</span>
<span class="t " style="left:258px;top:871.4px;color:#B0B4BC;letter-spacing:0.063px;">github</span>
<span class="t " style="left:318px;top:871.4px;color:#B0B4BC;letter-spacing:-0.073px;">exception</span>
<svg class="i" style="left:398.5px;top:873px" width="15" height="15" viewBox="0 0 16 16" ><circle cx="7.5" cy="8" r="6.6" fill="#25324D" stroke="#548AF7" stroke-width="1.15"/><path d="M9.8 6.3C9.3 5.5 8.5 5 7.5 5 5.8 5 4.5 6.3 4.5 8.1s1.3 3.1 3 3.1c1 0 1.9-.5 2.3-1.3" stroke="#548AF7" stroke-width="1.15" fill="none" stroke-linecap="round" stroke-linejoin="round" /><path d="M8.2 -.6v9l8-4.5z" fill="#2B2D30"/><path d="M9.3 .8v6.6l5.9-3.3z" fill="#1F3522" stroke="#57965C" stroke-width="1.15" stroke-linejoin="round"/></svg>
<span class="t " style="left:418px;top:871.4px;color:#B0B4BC;letter-spacing:0.289px;">Test</span>
<svg class="i" style="left:83.5px;top:874.5px" width="14" height="14" viewBox="0 0 16 16" ><path d="M6 4l4 4-4 4" stroke="#9A9DA5" stroke-width="1.4" fill="none" stroke-linecap="round" stroke-linejoin="round" /></svg>
<svg class="i" style="left:150.5px;top:874.5px" width="14" height="14" viewBox="0 0 16 16" ><path d="M6 4l4 4-4 4" stroke="#9A9DA5" stroke-width="1.4" fill="none" stroke-linecap="round" stroke-linejoin="round" /></svg>
<svg class="i" style="left:191.5px;top:874.5px" width="14" height="14" viewBox="0 0 16 16" ><path d="M6 4l4 4-4 4" stroke="#9A9DA5" stroke-width="1.4" fill="none" stroke-linecap="round" stroke-linejoin="round" /></svg>
<svg class="i" style="left:238.5px;top:874.5px" width="14" height="14" viewBox="0 0 16 16" ><path d="M6 4l4 4-4 4" stroke="#9A9DA5" stroke-width="1.4" fill="none" stroke-linecap="round" stroke-linejoin="round" /></svg>
<svg class="i" style="left:298.5px;top:874.5px" width="14" height="14" viewBox="0 0 16 16" ><path d="M6 4l4 4-4 4" stroke="#9A9DA5" stroke-width="1.4" fill="none" stroke-linecap="round" stroke-linejoin="round" /></svg>
<svg class="i" style="left:378.5px;top:874.5px" width="14" height="14" viewBox="0 0 16 16" ><path d="M6 4l4 4-4 4" stroke="#9A9DA5" stroke-width="1.4" fill="none" stroke-linecap="round" stroke-linejoin="round" /></svg>
<div class="a" style="left:888px;top:874px;width:14px;height:14px;border-radius:7px;background:#2F66D0"></div>
<svg class="i" style="left:888px;top:874px" width="14" height="14" viewBox="0 0 16 16" ><path d="M8 4.8L11.5 11h-7z" stroke="#fff" stroke-width="1.2" fill="none" stroke-linecap="round" stroke-linejoin="round" /></svg>
<span class="t " style="left:905px;top:871.2px;color:#B0B4BC;letter-spacing:0.094px;">3 Δ/up-to-date</span>
<span class="t " style="left:1003px;top:871.2px;color:#B0B4BC;letter-spacing:-0.274px;">Blame: You 27 4<span class="z">月</span> 2025 10:39</span>
<span class="t " style="left:1186.3px;top:871.2px;color:#B0B4BC;letter-spacing:-1.200px;">11:1</span>
<svg class="i" style="left:1220px;top:873.5px" width="16" height="16" viewBox="0 0 16 16" ><path d="M8 1.4L5.6 4.8h1L4.4 8h1.1L3.3 11.6h9.4L10.5 8h1.1L9.4 4.8h1z" fill="#3C3E43" stroke="#DFE1E5" stroke-width="1.1" stroke-linejoin="round"/><path d="M8 11.6v3" stroke="#DFE1E5" stroke-width="1.5" fill="none" stroke-linecap="round" stroke-linejoin="round" /></svg>
<svg class="i" style="left:1255px;top:873.5px" width="16" height="16" viewBox="0 0 16 16" ><path d="M1.8 5.2c3 0 4.5 5.6 7.7 5.6 1.6 0 2.8-1 3.2-2.6M1.8 10.8c3 0 4.5-5.6 7.7-5.6.5 0 1 .1 1.4.3" stroke="#5A5D63" stroke-width="1.4" fill="none" stroke-linecap="round" stroke-linejoin="round" /><circle cx="13.2" cy="5.2" r="0.9" stroke="#5A5D63" stroke-width="1" fill="#5A5D63"/></svg>
<svg class="i" style="left:1289px;top:873px" width="16" height="16" viewBox="0 0 16 16" ><path d="M5.1 .2l3.5.2.8 1.6 4.3.2 1.1 1.9-.5 1.8 1.6 3.5-1.1 1.9-2.4.8-1.9 3.5H7.6l-1.1-1.9H2.2l-1.1-1.8.5-2.5L0 6.2l1.1-2.1 2.7-.8z" fill="#6247F0" /><path d="M5.4 2.3V5h8.6M3 4.6l3.5 7.6H3.8M12.7 6.8L8.1 14M12.7 6.8l2.1 2.1" stroke="#FFFFFF" stroke-width="1.1" fill="none" stroke-linecap="round" stroke-linejoin="round" /></svg>
<div class="a" style="left:1322px;top:874px;width:6.5px;height:6.5px;background:#F25022"></div>
<div class="a" style="left:1329.5px;top:874px;width:6.5px;height:6.5px;background:#7FBA00"></div>
<div class="a" style="left:1322px;top:881.5px;width:6.5px;height:6.5px;background:#00A4EF"></div>
<div class="a" style="left:1329.5px;top:881.5px;width:6.5px;height:6.5px;background:#FFB900"></div>
<span class="t " style="left:1353px;top:871.2px;color:#B0B4BC;letter-spacing:-0.988px;">CRLF</span>
<span class="t " style="left:1399px;top:871.2px;color:#B0B4BC;letter-spacing:-0.769px;">UTF-8</span>
<span class="t " style="left:1452px;top:871.2px;color:#B0B4BC;letter-spacing:0.171px;">4 <span class="z">个空格</span></span>
<svg class="i" style="left:1513px;top:873px" width="16" height="16" viewBox="0 0 16 16" ><rect x="2.5" y="7.5" width="8.5" height="6.5" rx="1.5" stroke="#CED0D6" stroke-width="1" fill="none"/><path d="M8.5 7.5V5.3c0-1.4 1-2.3 2.3-2.3s2.3.9 2.3 2.3v1.5" stroke="#CED0D6" stroke-width="1.15" fill="none" stroke-linecap="round" stroke-linejoin="round" /><path d="M6.2 9.8h1.2v2H6.2z" fill="#9DA0A8" /></svg>
</div>
</div>
</body>
</html>
